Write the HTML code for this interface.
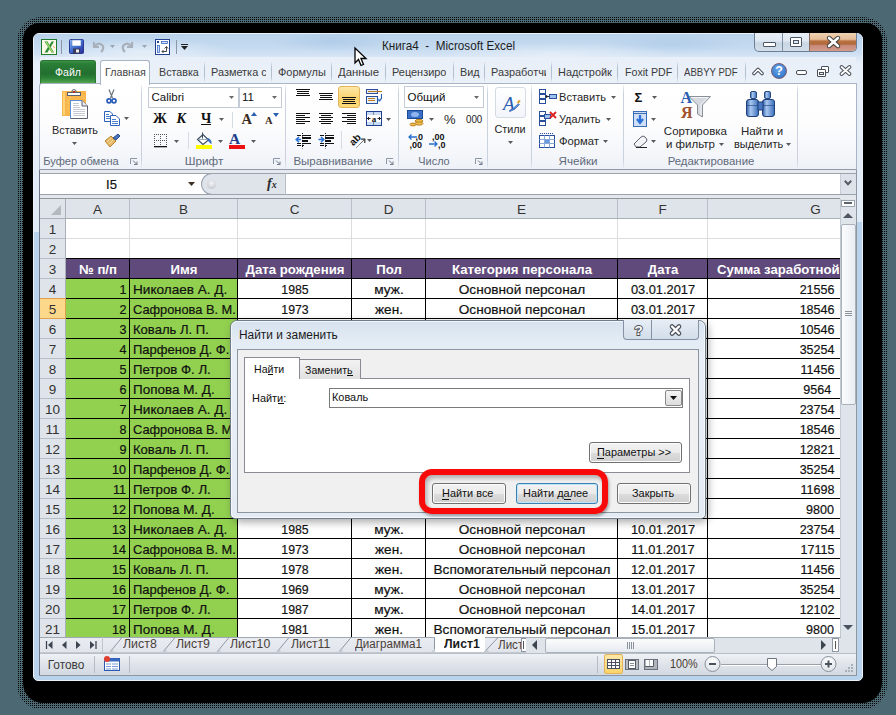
<!DOCTYPE html>
<html><head><meta charset="utf-8"><title>Excel</title>
<style>
html,body{margin:0;padding:0;}
body{width:896px;height:715px;overflow:hidden;position:relative;background:#4c6973;font-family:"Liberation Sans",sans-serif;}
div{position:absolute;box-sizing:border-box;}
.t{white-space:nowrap;}
.g{-webkit-text-stroke:0.2px currentColor;}
svg{position:absolute;overflow:visible;}
</style></head><body>

<div style="left:17px;top:17px;width:870px;height:692px;border-radius:24px;background-image:repeating-conic-gradient(#000 0 25%,transparent 0 100%);background-size:2px 2px;"></div>
<div style="left:23px;top:23px;width:859px;height:680px;background:#000;border-radius:16px 16px 20px 20px;"></div>
<div style="left:33px;top:33px;width:830px;height:648px;background:#b9d3ec;border-radius:6px 6px 5px 5px;border:1px solid #eaf3fb;"></div>
<div style="left:34px;top:34px;width:828px;height:188px;border-radius:5px 5px 0 0;background:linear-gradient(#b9d2eb 0px,#bfd6ed 6px,#c6dbf0 14px,#d0e1f3 20px,#dfe9f6 25px,#e8eff8 30px,#e8eff8 60px,#e1ebf6 188px);"></div>
<div style="left:34px;top:222px;width:6px;height:10px;background:#e1ebf6;"></div>
<div style="left:34px;top:34px;width:828px;height:26px;background:radial-gradient(ellipse 90px 14px at 110px 18px,rgba(255,255,255,0.45),rgba(255,255,255,0)),radial-gradient(ellipse 120px 12px at 520px 20px,rgba(255,255,255,0.4),rgba(255,255,255,0)),radial-gradient(ellipse 60px 10px at 300px 8px,rgba(150,185,225,0.35),rgba(150,185,225,0)),radial-gradient(ellipse 70px 10px at 640px 10px,rgba(150,185,225,0.3),rgba(150,185,225,0));"></div>
<div style="left:40px;top:57px;width:816px;height:27px;background:linear-gradient(#e8eff8,#ebf1f9);"></div>
<div class="t" style="left:381.5px;top:39.30px;font-size:13px;line-height:13px;color:#1e1e1e;font-weight:normal;transform:scaleX(0.9);transform-origin:0 0;">Книга4&nbsp; -&nbsp; Microsoft Excel</div>
<div style="left:754px;top:33px;width:103px;height:19px;border:1px solid #6e7f95;border-top:none;border-radius:0 0 5px 5px;background:linear-gradient(#e9eff6 0%,#dfe8f2 45%,#c9d6e4 55%,#d3dee9 100%);overflow:hidden;"><div style="left:27px;top:0;width:1px;height:18px;background:#7d8ea3;"></div><div style="left:54px;top:0;width:1px;height:18px;background:#8a6a5a;"></div><div style="left:55px;top:0;width:47px;height:18px;background:linear-gradient(#f0d2b2 0%,#e5bd98 35%,#b8703e 45%,#b06a3a 62%,#c98a7a 70%,#d39c8c 100%);"></div></div>
<div style="left:763px;top:42px;width:13px;height:5px;background:#fff;border:1px solid #4a5666;border-radius:1px;"></div>
<div style="left:790px;top:37px;width:12px;height:10px;background:#fff;border:1px solid #4a5666;border-radius:1px;"></div>
<div style="left:793px;top:40px;width:6px;height:4px;border:1px solid #4a5666;background:#dfe6ee;"></div>
<svg style="left:826px;top:36px" width="15" height="12" viewBox="0 0 15 12"><path d="M3 2 L12 10 M12 2 L3 10" stroke="#3a3a3a" stroke-width="4.4" stroke-linecap="round"/><path d="M3 2 L12 10 M12 2 L3 10" stroke="#fff" stroke-width="2.6" stroke-linecap="round"/></svg>
<div style="left:40px;top:60px;width:56px;height:24px;background:linear-gradient(#3a9444 0,#2a7e36 12%,#236f30 55%,#2c8338 75%,#5eae52 100%);border:1px solid #2a7434;border-bottom:none;border-radius:3px 3px 0 0;"></div>
<div class="t" style="left:55px;top:67.27px;font-size:11.5px;line-height:11.5px;color:#fff;font-weight:normal;transform:scaleX(0.92);transform-origin:0 0;">Файл</div>
<div style="left:39px;top:83px;width:818px;height:87px;background:linear-gradient(#ffffff 0px,#fdfdfe 40px,#f4f6fa 70px,#edf1f7 86px);border:1px solid #a9b5c4;border-bottom-color:#8e9aa8;border-radius:3px 0 0 0;"></div>
<div style="left:100px;top:60px;width:50px;height:25px;background:linear-gradient(#fdfeff,#ffffff);border:1px solid #a9b5c4;border-bottom:none;border-radius:3px 3px 0 0;"></div>
<div class="t" style="left:104.5px;top:67.27px;font-size:11.5px;line-height:11.5px;color:#444;font-weight:normal;transform:scaleX(0.93);transform-origin:0 0;">Главная</div>
<div class="t" style="left:158.5px;top:67.27px;font-size:11.5px;line-height:11.5px;color:#3b3b3b;font-weight:normal;transform:scaleX(0.931);transform-origin:0 0;">Вставка</div>
<div style="left:204px;top:61px;width:1px;height:22px;background:linear-gradient(rgba(170,185,205,0),#b3c0d0 30%,#b3c0d0 70%,rgba(170,185,205,0));"></div>
<div style="left:211.3px;top:62px;width:54.3px;height:18px;overflow:hidden;"><div class="t" style="left:0;top:5.27px;font-size:11.5px;line-height:11.5px;color:#3b3b3b;transform:scaleX(0.95);transform-origin:0 0;">Разметка страницы</div></div>
<div style="left:271px;top:61px;width:1px;height:22px;background:linear-gradient(rgba(170,185,205,0),#b3c0d0 30%,#b3c0d0 70%,rgba(170,185,205,0));"></div>
<div class="t" style="left:277.6px;top:67.27px;font-size:11.5px;line-height:11.5px;color:#3b3b3b;font-weight:normal;transform:scaleX(0.955);transform-origin:0 0;">Формулы</div>
<div style="left:331px;top:61px;width:1px;height:22px;background:linear-gradient(rgba(170,185,205,0),#b3c0d0 30%,#b3c0d0 70%,rgba(170,185,205,0));"></div>
<div class="t" style="left:338px;top:67.27px;font-size:11.5px;line-height:11.5px;color:#3b3b3b;font-weight:normal;transform:scaleX(0.99);transform-origin:0 0;">Данные</div>
<div style="left:385px;top:61px;width:1px;height:22px;background:linear-gradient(rgba(170,185,205,0),#b3c0d0 30%,#b3c0d0 70%,rgba(170,185,205,0));"></div>
<div style="left:392.3px;top:62px;width:54px;height:18px;overflow:hidden;"><div class="t" style="left:0;top:5.27px;font-size:11.5px;line-height:11.5px;color:#3b3b3b;transform:scaleX(0.95);transform-origin:0 0;">Рецензирование</div></div>
<div style="left:453px;top:61px;width:1px;height:22px;background:linear-gradient(rgba(170,185,205,0),#b3c0d0 30%,#b3c0d0 70%,rgba(170,185,205,0));"></div>
<div class="t" style="left:459.8px;top:67.27px;font-size:11.5px;line-height:11.5px;color:#3b3b3b;font-weight:normal;transform:scaleX(0.938);transform-origin:0 0;">Вид</div>
<div style="left:484px;top:61px;width:1px;height:22px;background:linear-gradient(rgba(170,185,205,0),#b3c0d0 30%,#b3c0d0 70%,rgba(170,185,205,0));"></div>
<div style="left:491px;top:62px;width:55px;height:18px;overflow:hidden;"><div class="t" style="left:0;top:5.27px;font-size:11.5px;line-height:11.5px;color:#3b3b3b;transform:scaleX(0.95);transform-origin:0 0;">Разработчик</div></div>
<div style="left:551px;top:61px;width:1px;height:22px;background:linear-gradient(rgba(170,185,205,0),#b3c0d0 30%,#b3c0d0 70%,rgba(170,185,205,0));"></div>
<div style="left:558.3px;top:62px;width:53.4px;height:18px;overflow:hidden;"><div class="t" style="left:0;top:5.27px;font-size:11.5px;line-height:11.5px;color:#3b3b3b;transform:scaleX(0.95);transform-origin:0 0;">Надстройки</div></div>
<div style="left:617px;top:61px;width:1px;height:22px;background:linear-gradient(rgba(170,185,205,0),#b3c0d0 30%,#b3c0d0 70%,rgba(170,185,205,0));"></div>
<div class="t" style="left:624.5px;top:67.27px;font-size:11.5px;line-height:11.5px;color:#3b3b3b;font-weight:normal;transform:scaleX(0.925);transform-origin:0 0;">Foxit PDF</div>
<div style="left:677px;top:61px;width:1px;height:22px;background:linear-gradient(rgba(170,185,205,0),#b3c0d0 30%,#b3c0d0 70%,rgba(170,185,205,0));"></div>
<div class="t" style="left:684px;top:67.27px;font-size:11.5px;line-height:11.5px;color:#3b3b3b;font-weight:normal;transform:scaleX(0.834);transform-origin:0 0;">ABBYY PDF</div>
<div style="left:745px;top:61px;width:1px;height:22px;background:linear-gradient(rgba(170,185,205,0),#b3c0d0 30%,#b3c0d0 70%,rgba(170,185,205,0));"></div>
<svg style="left:752px;top:67px" width="12" height="9" viewBox="0 0 12 9"><path d="M2 6.5 L6 2.5 L10 6.5" stroke="#4a4f58" stroke-width="3.6" fill="none" stroke-linecap="round" stroke-linejoin="round"/><path d="M2 6.5 L6 2.5 L10 6.5" stroke="#fff" stroke-width="1.6" fill="none" stroke-linecap="round" stroke-linejoin="round"/></svg>
<div style="left:771px;top:63px;width:16px;height:16px;border-radius:50%;background:radial-gradient(circle at 45% 35%,#6aa6ea,#3a7fd0 65%,#2a66b8);border:1px solid #7a5a6a;"></div>
<div class="t" style="left:479.20000000000005px;width:600px;text-align:center;top:64.92px;font-size:12.5px;line-height:12.5px;color:#fff;font-weight:bold;transform-origin:50% 0;">?</div>
<div style="left:796px;top:70px;width:11px;height:5px;background:#fff;border:1px solid #4a4f58;border-radius:2px;"></div>
<div style="left:821px;top:66px;width:8px;height:7px;border:1px solid #4a4f58;background:#fff;border-radius:1px;box-shadow:inset 0 0 0 1px #fff;"></div>
<div style="left:817px;top:69px;width:9px;height:8px;border:1px solid #4a4f58;background:#fff;border-radius:1px;"></div>
<div style="left:819px;top:72px;width:5px;height:3px;border:1px solid #4a4f58;background:#e8ecf2;"></div>
<svg style="left:839px;top:65px" width="13" height="11" viewBox="0 0 13 11"><path d="M2.5 2 L10.5 9 M10.5 2 L2.5 9" stroke="#4a4f58" stroke-width="3.8" stroke-linecap="round"/><path d="M2.5 2 L10.5 9 M10.5 2 L2.5 9" stroke="#fff" stroke-width="1.8" stroke-linecap="round"/></svg>
<div style="left:141px;top:85px;width:1px;height:83px;background:linear-gradient(rgba(200,210,225,0.3),#c9d2de 10%,#c9d2de 90%,rgba(200,210,225,0.3));"></div>
<div style="left:285px;top:85px;width:1px;height:83px;background:linear-gradient(rgba(200,210,225,0.3),#c9d2de 10%,#c9d2de 90%,rgba(200,210,225,0.3));"></div>
<div style="left:398px;top:85px;width:1px;height:83px;background:linear-gradient(rgba(200,210,225,0.3),#c9d2de 10%,#c9d2de 90%,rgba(200,210,225,0.3));"></div>
<div style="left:487px;top:85px;width:1px;height:83px;background:linear-gradient(rgba(200,210,225,0.3),#c9d2de 10%,#c9d2de 90%,rgba(200,210,225,0.3));"></div>
<div style="left:531px;top:85px;width:1px;height:83px;background:linear-gradient(rgba(200,210,225,0.3),#c9d2de 10%,#c9d2de 90%,rgba(200,210,225,0.3));"></div>
<div style="left:623px;top:85px;width:1px;height:83px;background:linear-gradient(rgba(200,210,225,0.3),#c9d2de 10%,#c9d2de 90%,rgba(200,210,225,0.3));"></div>
<div style="left:797px;top:85px;width:1px;height:83px;background:linear-gradient(rgba(200,210,225,0.3),#c9d2de 10%,#c9d2de 90%,rgba(200,210,225,0.3));"></div>
<div class="t" style="left:-218.8px;width:600px;text-align:center;top:156.27px;font-size:11.5px;line-height:11.5px;color:#5f6a7a;font-weight:normal;transform:scaleX(0.966);transform-origin:50% 0;">Буфер обмена</div>
<div class="t" style="left:-95.69999999999999px;width:600px;text-align:center;top:156.27px;font-size:11.5px;line-height:11.5px;color:#5f6a7a;font-weight:normal;transform:scaleX(1.02);transform-origin:50% 0;">Шрифт</div>
<div class="t" style="left:33px;width:600px;text-align:center;top:156.27px;font-size:11.5px;line-height:11.5px;color:#5f6a7a;font-weight:normal;transform-origin:50% 0;">Выравнивание</div>
<div class="t" style="left:133.7px;width:600px;text-align:center;top:156.27px;font-size:11.5px;line-height:11.5px;color:#5f6a7a;font-weight:normal;transform:scaleX(0.95);transform-origin:50% 0;">Число</div>
<div class="t" style="left:277.79999999999995px;width:600px;text-align:center;top:156.27px;font-size:11.5px;line-height:11.5px;color:#5f6a7a;font-weight:normal;transform:scaleX(1.01);transform-origin:50% 0;">Ячейки</div>
<div class="t" style="left:411px;width:600px;text-align:center;top:156.27px;font-size:11.5px;line-height:11.5px;color:#5f6a7a;font-weight:normal;transform:scaleX(0.99);transform-origin:50% 0;">Редактирование</div>
<svg style="left:130px;top:158px" width="8" height="7" viewBox="0 0 8 7"><path d="M0.5 6 V0.5 H7" stroke="#8a96a6" fill="none"/><path d="M3 2.5 L7 6.5 M7 3.5 V6.5 H4" stroke="#6f7b8a" fill="none"/></svg>
<svg style="left:273px;top:158px" width="8" height="7" viewBox="0 0 8 7"><path d="M0.5 6 V0.5 H7" stroke="#8a96a6" fill="none"/><path d="M3 2.5 L7 6.5 M7 3.5 V6.5 H4" stroke="#6f7b8a" fill="none"/></svg>
<svg style="left:386px;top:158px" width="8" height="7" viewBox="0 0 8 7"><path d="M0.5 6 V0.5 H7" stroke="#8a96a6" fill="none"/><path d="M3 2.5 L7 6.5 M7 3.5 V6.5 H4" stroke="#6f7b8a" fill="none"/></svg>
<svg style="left:475px;top:158px" width="8" height="7" viewBox="0 0 8 7"><path d="M0.5 6 V0.5 H7" stroke="#8a96a6" fill="none"/><path d="M3 2.5 L7 6.5 M7 3.5 V6.5 H4" stroke="#6f7b8a" fill="none"/></svg>
<svg style="left:58px;top:87px" width="32" height="32" viewBox="0 0 32 32">
<rect x="4" y="4" width="24" height="25" fill="#f7b54a"/>
<rect x="5" y="5" width="2" height="23" fill="#fcd27a"/>
<path d="M9.5 9h1 M11.5 11h1 M9.5 13h1 M9.5 16h1 M9.5 19h1 M9.5 22h1 M11.5 25h1 M23.5 9h1 M25.5 11h1" stroke="#fde29a"/>
<rect x="9.5" y="5.5" width="13" height="3" fill="#fff" stroke="#5a6070"/>
<path d="M14 5.5 V3.5 Q16 1.5 18 3.5 V5.5" fill="none" stroke="#5a6070"/>
<rect x="15" y="4" width="2" height="2" fill="#c03020"/>
<path d="M12.5 13.5 H24 L29.5 19 V31.5 H12.5 Z" fill="#fff" stroke="#5a6070"/>
<path d="M12.5 31.5 V13.5 H24" stroke="#5a90d8" fill="none"/>
<path d="M24 13.5 V19 H29.5" fill="#e8ecf2" stroke="#5a6070"/>
<path d="M15 16.5h6 M15 18.5h6 M15 20.5h7 M15 22.5h12 M15 24.5h12 M15 26.5h12 M15 28.5h12" stroke="#aab4c2" stroke-width="0.7"/>
</svg>
<div class="t" style="left:51.7px;top:124.87px;font-size:11.5px;line-height:11.5px;color:#262626;font-weight:normal;transform:scaleX(0.944);transform-origin:0 0;">Вставить</div>
<svg style="left:72px;top:142px" width="5" height="3" viewBox="0 0 5 3"><path d="M0 0 H5 L2.5 3 Z" fill="#5a5a5a"/></svg>
<svg style="left:105px;top:89px" width="13" height="15" viewBox="0 0 13 15">
<path d="M4 0.5 L7.5 9 M9 0.5 L5.5 9" stroke="#6d737c" stroke-width="1.2"/>
<circle cx="4" cy="11.8" r="2" fill="none" stroke="#2a5cb8" stroke-width="1.7"/>
<circle cx="9" cy="11.8" r="2" fill="none" stroke="#2a5cb8" stroke-width="1.7"/>
</svg>
<svg style="left:104px;top:111px" width="16" height="15" viewBox="0 0 16 15">
<path d="M0.5 0.5 H6 L8.5 3 V10.5 H0.5 Z" fill="#fff" stroke="#2f62b8"/>
<path d="M2 3.5h3 M2 5.5h5 M2 7.5h5" stroke="#4a7fd0"/>
<path d="M6.5 4.5 H12 L15.5 8 V14.5 H6.5 Z" fill="#fff" stroke="#2f62b8"/>
<path d="M8 8.5h4 M8 10.5h6 M8 12.5h6" stroke="#4a7fd0"/>
</svg>
<svg style="left:124px;top:117px" width="5" height="3" viewBox="0 0 5 3"><path d="M0 0 H5 L2.5 3 Z" fill="#5a5a5a"/></svg>
<svg style="left:104px;top:133px" width="17" height="15" viewBox="0 0 17 15">
<path d="M1 8 L7 3 L12 8 L6 14 Z" fill="#e7b868" stroke="#b98530"/>
<path d="M3 9 L7 5 M5 11 L9 7" stroke="#f6dca0"/>
<path d="M9 5 L14 1 L16 3 L12 7 Z" fill="#4a74b8" stroke="#2d4f8a"/>
</svg>
<div style="left:148px;top:87px;width:91px;height:21px;background:#fff;border:1px solid #c3cbd6;"></div>
<div style="left:239px;top:87px;width:43px;height:21px;background:#fff;border:1px solid #c3cbd6;"></div>
<div class="t" style="left:151.5px;top:92.27px;font-size:11.5px;line-height:11.5px;color:#111;font-weight:normal;transform-origin:0 0;">Calibri</div>
<div class="t" style="left:242px;top:92.27px;font-size:11.5px;line-height:11.5px;color:#111;font-weight:normal;transform-origin:0 0;">11</div>
<svg style="left:229px;top:96px" width="5" height="3" viewBox="0 0 5 3"><path d="M0 0 H5 L2.5 3 Z" fill="#6a6a6a"/></svg>
<svg style="left:272px;top:96px" width="5" height="3" viewBox="0 0 5 3"><path d="M0 0 H5 L2.5 3 Z" fill="#6a6a6a"/></svg>
<div class="t" style="left:153px;top:112.15px;font-size:14px;line-height:14px;color:#111;font-weight:bold;font-family:'Liberation Serif',serif;transform-origin:0 0;">Ж</div>
<div class="t" style="left:176.5px;top:112.15px;font-size:14px;line-height:14px;color:#111;font-weight:bold;font-family:'Liberation Serif',serif;transform-origin:0 0;font-style:italic;">К</div>
<div class="t" style="left:201px;top:112.15px;font-size:14px;line-height:14px;color:#111;font-weight:bold;font-family:'Liberation Serif',serif;transform-origin:0 0;">Ч</div>
<div style="left:201px;top:124px;width:10px;height:1px;background:#111;"></div>
<svg style="left:219px;top:118px" width="5" height="3" viewBox="0 0 5 3"><path d="M0 0 H5 L2.5 3 Z" fill="#5a5a5a"/></svg>
<div style="left:232px;top:112px;width:1px;height:16px;background:#d4dbe5;"></div>
<div class="t" style="left:241.5px;top:112.23px;font-size:14.5px;line-height:14.5px;color:#3a2c20;font-weight:bold;font-family:'Liberation Serif',serif;transform-origin:0 0;">A</div>
<svg style="left:251px;top:112px" width="6" height="4" viewBox="0 0 6 4"><path d="M0 4 L3 0 L6 4Z" fill="#2a5fb0"/></svg>
<div class="t" style="left:265px;top:115.61px;font-size:10.5px;line-height:10.5px;color:#3a2c20;font-weight:bold;font-family:'Liberation Serif',serif;transform-origin:0 0;">A</div>
<svg style="left:273px;top:113px" width="6" height="4" viewBox="0 0 6 4"><path d="M0 0 L3 4 L6 0Z" fill="#2a5fb0"/></svg>
<svg style="left:154px;top:134px" width="14" height="14" viewBox="0 0 14 14"><rect x="0" y="0" width="1" height="1" fill="#555"/><rect x="6" y="0" width="1" height="1" fill="#555"/><rect x="12" y="0" width="1" height="1" fill="#555"/><rect x="0" y="2" width="1" height="1" fill="#555"/><rect x="6" y="2" width="1" height="1" fill="#555"/><rect x="12" y="2" width="1" height="1" fill="#555"/><rect x="0" y="4" width="1" height="1" fill="#555"/><rect x="6" y="4" width="1" height="1" fill="#555"/><rect x="12" y="4" width="1" height="1" fill="#555"/><rect x="0" y="6" width="1" height="1" fill="#555"/><rect x="6" y="6" width="1" height="1" fill="#555"/><rect x="12" y="6" width="1" height="1" fill="#555"/><rect x="0" y="8" width="1" height="1" fill="#555"/><rect x="6" y="8" width="1" height="1" fill="#555"/><rect x="12" y="8" width="1" height="1" fill="#555"/><rect x="0" y="10" width="1" height="1" fill="#555"/><rect x="6" y="10" width="1" height="1" fill="#555"/><rect x="12" y="10" width="1" height="1" fill="#555"/><rect x="0" y="12" width="1" height="1" fill="#555"/><rect x="6" y="12" width="1" height="1" fill="#555"/><rect x="12" y="12" width="1" height="1" fill="#555"/><rect x="2" y="0" width="1" height="1" fill="#555"/><rect x="4" y="0" width="1" height="1" fill="#555"/><rect x="8" y="0" width="1" height="1" fill="#555"/><rect x="10" y="0" width="1" height="1" fill="#555"/><rect x="2" y="6" width="1" height="1" fill="#555"/><rect x="4" y="6" width="1" height="1" fill="#555"/><rect x="8" y="6" width="1" height="1" fill="#555"/><rect x="10" y="6" width="1" height="1" fill="#555"/><rect x="0" y="12" width="13" height="1.3" fill="#111"/></svg>
<svg style="left:174px;top:140px" width="5" height="3" viewBox="0 0 5 3"><path d="M0 0 H5 L2.5 3 Z" fill="#5a5a5a"/></svg>
<div style="left:188px;top:132px;width:1px;height:17px;background:#d4dbe5;"></div>
<svg style="left:195px;top:132px" width="18" height="17" viewBox="0 0 18 17">
<path d="M2.5 7.5 L8 2.5 L13.5 8 L8 12.5 Z" fill="#fff" stroke="#3a4a60" stroke-width="1.1"/>
<path d="M3 7.5 H13" stroke="#9ab" />
<path d="M7.5 0.5 V6.5" stroke="#3a4a60"/>
<path d="M12.5 6.5 Q16.5 7 16 11.5 L14 9.5 Z" fill="#3a78d0" stroke="#2a5aa8" stroke-width="0.8"/>
<rect x="1" y="13" width="16" height="4" fill="#ffff00"/>
</svg>
<svg style="left:218px;top:140px" width="5" height="3" viewBox="0 0 5 3"><path d="M0 0 H5 L2.5 3 Z" fill="#5a5a5a"/></svg>
<div class="t" style="left:229px;top:130.88px;font-size:15.5px;line-height:15.5px;color:#1f3f8a;font-weight:bold;font-family:'Liberation Serif',serif;transform-origin:0 0;">A</div>
<div style="left:228.5px;top:145px;width:16px;height:4px;background:#ee1111;"></div>
<svg style="left:251px;top:140px" width="5" height="3" viewBox="0 0 5 3"><path d="M0 0 H5 L2.5 3 Z" fill="#5a5a5a"/></svg>
<svg style="left:296px;top:89px" width="20" height="20" viewBox="0 0 20 20"><path d="M0 0.5 h14 M1 2.5 h12 M1 4.5 h12 M0 6.5 h14 " stroke="#111" stroke-width="1"/></svg>
<svg style="left:319px;top:93px" width="20" height="20" viewBox="0 0 20 20"><path d="M0 0.5 h14 M1 2.5 h12 M1 4.5 h12 M0 6.5 h14 " stroke="#111" stroke-width="1"/></svg>
<div style="left:338px;top:86px;width:22px;height:22px;background:linear-gradient(#fde8a8,#fbd36a 60%,#fcdc7a);border:1px solid #e3b35a;border-radius:3px;"></div>
<svg style="left:342px;top:97px" width="20" height="20" viewBox="0 0 20 20"><path d="M0 0.5 h14 M1 2.5 h12 M1 4.5 h12 M0 6.5 h14 " stroke="#111" stroke-width="1"/></svg>
<svg style="left:365px;top:88px" width="18" height="17" viewBox="0 0 18 17">
<rect x="1.5" y="1.5" width="11" height="4" fill="#e8f1fc" stroke="#2a4f9a"/>
<rect x="1.5" y="8.5" width="11" height="7" fill="#e8f1fc" stroke="#2a4f9a"/>
<path d="M3 3.5 H17" stroke="#c07a20" stroke-width="1.1"/>
<path d="M3 10.5 H10 M3 12.5 H10" stroke="#c07a20" stroke-width="1.1"/>
<path d="M16.5 6 V10.5 L14 13" stroke="#2a5fb0" fill="none" stroke-width="1.1"/>
<path d="M13 10.5 L13.5 13.5 L16 13Z" fill="#2a70d0"/>
</svg>
<svg style="left:296px;top:113px" width="20" height="20" viewBox="0 0 20 20"><path d="M0 0.5 h14 M0 2.5 h9 M0 4.5 h14 M0 6.5 h9 M0 8.5 h14 M0 10.5 h9 " stroke="#111" stroke-width="1"/></svg>
<svg style="left:319px;top:113px" width="20" height="20" viewBox="0 0 20 20"><path d="M0 0.5 h14 M2 2.5 h10 M0 4.5 h14 M2 6.5 h10 M0 8.5 h14 M2 10.5 h10 " stroke="#111" stroke-width="1"/></svg>
<svg style="left:342px;top:113px" width="20" height="20" viewBox="0 0 20 20"><path d="M0 0.5 h14 M5 2.5 h9 M0 4.5 h14 M5 6.5 h9 M0 8.5 h14 M5 10.5 h9 " stroke="#111" stroke-width="1"/></svg>
<svg style="left:366px;top:111px" width="16" height="15" viewBox="0 0 16 15">
<rect x="0.5" y="0.5" width="15" height="14" fill="#fff" stroke="#1f3f8f"/>
<rect x="1" y="1" width="14" height="3" fill="#c9dcf5"/>
<rect x="1" y="11" width="14" height="3" fill="#c9dcf5"/>
<path d="M7.5 1 V4 M7.5 11 V14" stroke="#7a8aa0"/>
<path d="M1 7.5 H4.5 M11.5 7.5 H15" stroke="#222"/>
<path d="M3 6 L1.5 7.5 L3 9 M13 6 L14.5 7.5 L13 9" stroke="#222" fill="none"/>
<text x="8" y="10.5" font-family="Liberation Serif" font-size="9" font-weight="bold" text-anchor="middle" fill="#111">a</text>
</svg>
<svg style="left:386px;top:118px" width="5" height="3" viewBox="0 0 5 3"><path d="M0 0 H5 L2.5 3 Z" fill="#5a5a5a"/></svg>
<svg style="left:295px;top:133px" width="18" height="16" viewBox="0 0 18 16">
<path d="M2 2.5h4 M2 10.5h4 M2 12.5h4" stroke="#111"/>
<path d="M7.5 0 V16" stroke="#111" stroke-dasharray="1 1.6"/>
<path d="M7 2.5h9 M7 10.5h9 M7 12.5h2" stroke="#111"/>
<rect x="7" y="4" width="9" height="2" fill="#111"/>
<rect x="7" y="7" width="6" height="2" fill="#111"/>
<path d="M6 6.6 H2 M4 4 L1.2 6.6 L4 9.2" stroke="#2a6fd6" fill="none" stroke-width="1.5"/>
</svg>
<svg style="left:318px;top:133px" width="18" height="16" viewBox="0 0 18 16">
<path d="M2 2.5h4 M2 10.5h4 M2 12.5h4" stroke="#111"/>
<path d="M7.5 0 V16" stroke="#111" stroke-dasharray="1 1.6"/>
<path d="M7 2.5h9 M7 10.5h9 M7 12.5h2" stroke="#111"/>
<rect x="7" y="4" width="9" height="2" fill="#111"/>
<rect x="7" y="7" width="6" height="2" fill="#111"/>
<path d="M0.5 6.6 H5 M3 4 L5.8 6.6 L3 9.2" stroke="#2a6fd6" fill="none" stroke-width="1.5"/>
</svg>
<div style="left:341px;top:131px;width:1px;height:18px;background:#d4dbe5;"></div>
<svg style="left:348px;top:132px" width="18" height="17" viewBox="0 0 18 17">
<text x="0" y="0" transform="translate(5.2,14.2) rotate(-45)" font-family="Liberation Sans" font-size="10" font-weight="bold" fill="#111">ab</text>
<path d="M8.5 15.5 L16 8" stroke="#333" stroke-dasharray="1 0.6"/>
<path d="M13 7.2 H16.8 V11" stroke="#333" fill="none" stroke-width="1.2"/>
</svg>
<svg style="left:367px;top:139px" width="5" height="3" viewBox="0 0 5 3"><path d="M0 0 H5 L2.5 3 Z" fill="#5a5a5a"/></svg>
<div style="left:404px;top:86px;width:80px;height:22px;background:#fff;border:1px solid #c3cbd6;"></div>
<div class="t" style="left:407.5px;top:92.27px;font-size:11.5px;line-height:11.5px;color:#111;font-weight:normal;transform-origin:0 0;">Общий</div>
<svg style="left:474px;top:96px" width="5" height="3" viewBox="0 0 5 3"><path d="M0 0 H5 L2.5 3 Z" fill="#6a6a6a"/></svg>
<svg style="left:407px;top:110px" width="18" height="18" viewBox="0 0 18 18">
<rect x="0.5" y="0.5" width="15" height="8" fill="#3a6fc8" stroke="#1d4a95"/>
<ellipse cx="8" cy="4.5" rx="4" ry="2.5" fill="#8fb5ee"/>
<ellipse cx="12" cy="11" rx="4" ry="1.6" fill="#f2c050" stroke="#b98020"/>
<ellipse cx="12" cy="13.5" rx="4" ry="1.6" fill="#f2c050" stroke="#b98020"/>
<ellipse cx="6" cy="14.5" rx="3" ry="1.4" fill="#f2c050" stroke="#b98020"/>
</svg>
<svg style="left:429px;top:118px" width="5" height="3" viewBox="0 0 5 3"><path d="M0 0 H5 L2.5 3 Z" fill="#5a5a5a"/></svg>
<div class="t" style="left:444px;top:113.00px;font-size:13px;line-height:13px;color:#222;font-weight:normal;transform-origin:0 0;">%</div>
<div class="t" style="left:466px;top:114.27px;font-size:11.5px;line-height:11.5px;color:#222;font-weight:normal;transform:scaleX(0.85);transform-origin:0 0;">000</div>
<div class="t" style="left:415.5px;top:133.38px;font-size:9px;line-height:9px;color:#111;font-weight:bold;transform-origin:0 0;">,0</div>
<div class="t" style="left:409.5px;top:140.88px;font-size:9px;line-height:9px;color:#111;font-weight:bold;transform-origin:0 0;">,00</div>
<svg style="left:408px;top:134px" width="9" height="6" viewBox="0 0 9 6"><path d="M9 3 H1 M3.5 0.5 L1 3 L3.5 5.5" stroke="#2a70d0" stroke-width="1.3" fill="none"/></svg>
<div class="t" style="left:432px;top:133.38px;font-size:9px;line-height:9px;color:#111;font-weight:bold;transform-origin:0 0;">,00</div>
<div class="t" style="left:438px;top:140.88px;font-size:9px;line-height:9px;color:#111;font-weight:bold;transform-origin:0 0;">,0</div>
<svg style="left:429px;top:141px" width="9" height="6" viewBox="0 0 9 6"><path d="M0 3 H8 M5.5 0.5 L8 3 L5.5 5.5" stroke="#2a70d0" stroke-width="1.3" fill="none"/></svg>
<div style="left:495px;top:87px;width:31px;height:31px;background:linear-gradient(#ffffff,#f2f5fa);border:1px solid #d5dbe4;border-radius:3px;"></div>
<svg style="left:500px;top:92px" width="22" height="22" viewBox="0 0 22 22">
<text x="3" y="18" font-family="Liberation Serif" font-style="italic" font-size="19" fill="#2a5cb0">A</text>
<path d="M9 19 Q13 17 18.5 11.5 L19.5 12.5 Q15 18 10 19.5 Z" fill="#5a8fd8" stroke="#2a5cb0" stroke-width="0.6"/>
<path d="M17.5 11 L20 8.5" stroke="#e0a030" stroke-width="2"/>
</svg>
<div class="t" style="left:210.3px;width:600px;text-align:center;top:123.77px;font-size:11.5px;line-height:11.5px;color:#262626;font-weight:normal;transform:scaleX(0.942);transform-origin:50% 0;">Стили</div>
<svg style="left:508px;top:141px" width="5" height="3" viewBox="0 0 5 3"><path d="M0 0 H5 L2.5 3 Z" fill="#5a5a5a"/></svg>
<svg style="left:539px;top:89px" width="18" height="15" viewBox="0 0 18 15">
<rect x="0.5" y="0.5" width="6" height="4" fill="#fff" stroke="#2a4f9a"/>
<rect x="0.5" y="5.5" width="6" height="4" fill="#fff" stroke="#2a4f9a"/>
<rect x="0.5" y="10.5" width="6" height="4" fill="#fff" stroke="#2a4f9a"/>
<rect x="10.5" y="5.5" width="7" height="4" fill="#9ec0ee" stroke="#2a4f9a"/>
<path d="M7 7.5 H10 M8 6 L7 7.5 L8 9" stroke="#222" fill="none"/>
</svg>
<div class="t" style="left:559px;top:92.27px;font-size:11.5px;line-height:11.5px;color:#262626;font-weight:normal;transform:scaleX(0.964);transform-origin:0 0;">Вставить</div>
<svg style="left:611px;top:96px" width="5" height="3" viewBox="0 0 5 3"><path d="M0 0 H5 L2.5 3 Z" fill="#5a5a5a"/></svg>
<svg style="left:539px;top:111px" width="18" height="15" viewBox="0 0 18 15">
<rect x="0.5" y="0.5" width="6" height="4" fill="#fff" stroke="#2a4f9a"/>
<rect x="0.5" y="5.5" width="6" height="4" fill="#fff" stroke="#2a4f9a"/>
<rect x="0.5" y="10.5" width="6" height="4" fill="#fff" stroke="#2a4f9a"/>
<rect x="5.5" y="3.5" width="6" height="4" fill="#9ec0ee" stroke="#2a4f9a"/>
<path d="M11 1 L17 7 M17 1 L11 7" stroke="#e02020" stroke-width="1.8"/>
</svg>
<div class="t" style="left:559px;top:114.27px;font-size:11.5px;line-height:11.5px;color:#262626;font-weight:normal;transform:scaleX(0.946);transform-origin:0 0;">Удалить</div>
<svg style="left:606px;top:118px" width="5" height="3" viewBox="0 0 5 3"><path d="M0 0 H5 L2.5 3 Z" fill="#5a5a5a"/></svg>
<svg style="left:539px;top:133px" width="17" height="16" viewBox="0 0 17 16">
<rect x="0.5" y="2.5" width="15" height="12" fill="#fff" stroke="#2a4f9a"/>
<path d="M0.5 6.5 H15.5 M0.5 10.5 H15.5 M5.5 2.5 V14.5 M10.5 2.5 V14.5" stroke="#8aa8d8"/>
<rect x="6" y="7" width="4" height="3" fill="#6a9ae0"/>
<path d="M1 0.5 H15" stroke="#2a4f9a" stroke-dasharray="1 1"/>
</svg>
<div class="t" style="left:559px;top:136.07px;font-size:11.5px;line-height:11.5px;color:#262626;font-weight:normal;transform:scaleX(0.979);transform-origin:0 0;">Формат</div>
<svg style="left:603px;top:140px" width="5" height="3" viewBox="0 0 5 3"><path d="M0 0 H5 L2.5 3 Z" fill="#5a5a5a"/></svg>
<div class="t" style="left:634.5px;top:91.00px;font-size:13px;line-height:13px;color:#111;font-weight:bold;transform-origin:0 0;">Σ</div>
<svg style="left:652px;top:96px" width="5" height="3" viewBox="0 0 5 3"><path d="M0 0 H5 L2.5 3 Z" fill="#5a5a5a"/></svg>
<svg style="left:633px;top:111px" width="14" height="16" viewBox="0 0 14 16">
<rect x="0.5" y="0.5" width="13" height="15" fill="#cfe0f6" stroke="#3a6ab8"/>
<path d="M1 2.5 H13" stroke="#3a6ab8"/>
<path d="M7 4 V11 M4 8 L7 12 L10 8" stroke="#2a70d8" stroke-width="2.2" fill="none"/>
</svg>
<svg style="left:651px;top:118px" width="5" height="3" viewBox="0 0 5 3"><path d="M0 0 H5 L2.5 3 Z" fill="#5a5a5a"/></svg>
<svg style="left:633px;top:135px" width="15" height="13" viewBox="0 0 15 13">
<path d="M1 9 L8 2 Q10 0 12 2 L13 3 Q15 5 13 7 L7 12 H3 Z" fill="#f2f4f8" stroke="#5a6070"/>
<path d="M3 12.5 H14" stroke="#222"/>
</svg>
<svg style="left:651px;top:140px" width="5" height="3" viewBox="0 0 5 3"><path d="M0 0 H5 L2.5 3 Z" fill="#5a5a5a"/></svg>
<svg style="left:680px;top:89px" width="32" height="30" viewBox="0 0 32 30">
<path d="M9 7.5 H30.5 L22.5 16 V28 L17.5 25 V16 Z" fill="#d5d9df" stroke="#8a9098"/>
<path d="M11.5 8.5 H28 L21 15.5 V26" stroke="#f4f5f7" fill="none"/>
<text x="0.5" y="14" font-family="Liberation Serif" font-size="16" fill="#2a5cb0" font-weight="bold">A</text>
<text x="1" y="29" font-family="Liberation Serif" font-size="16" fill="#a0522d" font-weight="bold">Я</text>
</svg>
<div class="t" style="left:395.4px;width:600px;text-align:center;top:125.87px;font-size:11.5px;line-height:11.5px;color:#262626;font-weight:normal;transform-origin:50% 0;">Сортировка</div>
<div class="t" style="left:666px;top:138.57px;font-size:11.5px;line-height:11.5px;color:#262626;font-weight:normal;transform-origin:0 0;">и фильтр</div>
<svg style="left:719px;top:143px" width="5" height="3" viewBox="0 0 5 3"><path d="M0 0 H5 L2.5 3 Z" fill="#5a5a5a"/></svg>
<svg style="left:746px;top:91px" width="29" height="26" viewBox="0 0 29 26">
<defs><linearGradient id="bn" x1="0" x2="1"><stop offset="0" stop-color="#2f5ea8"/><stop offset="0.35" stop-color="#a9c8f0"/><stop offset="1" stop-color="#3a6cb8"/></linearGradient></defs>
<rect x="4.5" y="0.5" width="6" height="7" rx="1.5" fill="url(#bn)" stroke="#2a4a80"/>
<rect x="18.5" y="0.5" width="6" height="7" rx="1.5" fill="url(#bn)" stroke="#2a4a80"/>
<rect x="0.5" y="8.5" width="12" height="17" rx="2.5" fill="url(#bn)" stroke="#1d3f7a"/>
<rect x="16.5" y="8.5" width="12" height="17" rx="2.5" fill="url(#bn)" stroke="#1d3f7a"/>
<rect x="12" y="11" width="5" height="8" fill="#4a78c0" stroke="#1d3f7a"/>
<path d="M1 14.5 H12 M17 14.5 H28" stroke="#1d3f7a" stroke-opacity="0.6"/>
</svg>
<div class="t" style="left:461.5px;width:600px;text-align:center;top:125.87px;font-size:11.5px;line-height:11.5px;color:#262626;font-weight:normal;transform:scaleX(0.995);transform-origin:50% 0;">Найти и</div>
<div class="t" style="left:733.5px;top:138.57px;font-size:11.5px;line-height:11.5px;color:#262626;font-weight:normal;transform:scaleX(0.954);transform-origin:0 0;">выделить</div>
<svg style="left:786px;top:143px" width="5" height="3" viewBox="0 0 5 3"><path d="M0 0 H5 L2.5 3 Z" fill="#5a5a5a"/></svg>
<div style="left:39px;top:170px;width:818px;height:29px;background:#e6e9ee;"></div>
<div style="left:40px;top:173px;width:816px;height:1px;background:#9aa3ae;"></div>
<div style="left:40px;top:174px;width:801px;height:20px;background:#fff;"></div>
<div style="left:40px;top:194px;width:816px;height:1px;background:#9aa3ae;"></div>
<div style="left:40px;top:195px;width:816px;height:3px;background:#e4e7ec;"></div>
<div style="left:40px;top:198px;width:800px;height:1px;background:#9098a2;"></div>
<div style="left:39px;top:170px;width:1px;height:506px;background:#6f7888;"></div>
<div class="t" style="left:-188.5px;width:600px;text-align:center;top:177.50px;font-size:13px;line-height:13px;color:#111;font-weight:normal;transform-origin:50% 0;-webkit-text-stroke:0.2px currentColor;">I5</div>
<svg style="left:188px;top:182px" width="7" height="4" viewBox="0 0 7 4"><path d="M0 0 H7 L3.5 4Z" fill="#3c3024"/></svg>
<div style="left:201px;top:173px;width:85px;height:22px;background:#dfe3ea;border-radius:11px 0 0 11px;border:1px solid #9aa3ae;border-right:1px solid #b9bfc8;"></div>
<div style="left:206.5px;top:179.5px;width:9px;height:9px;border-radius:50%;background:radial-gradient(circle at 50% 35%,#f4f5f7,#b9bec6);"></div>
<div class="t" style="left:267px;top:177.15px;font-size:14px;line-height:14px;color:#2b2b2b;font-weight:bold;font-family:'Liberation Serif',serif;transform-origin:0 0;"><i>f</i><span style="font-size:10px;font-style:italic">x</span></div>
<div style="left:840px;top:174px;width:16px;height:20px;background:#dee3ea;border-left:1px solid #c9ced6;"></div>
<svg style="left:844px;top:180px" width="8" height="6" viewBox="0 0 8 6"><path d="M0.8 0.8 L4 4.2 L7.2 0.8" stroke="#555c66" stroke-width="2" fill="none"/></svg>
<div style="left:40px;top:199px;width:800px;height:19px;background:#dfe3ea;"></div>
<div style="left:40px;top:218px;width:800px;height:1px;background:#a9b0b8;"></div>
<div style="left:66px;top:219px;width:774px;height:418px;background:#fff;"></div>
<div style="left:40px;top:219px;width:25px;height:418px;background:#dfe3ea;"></div>
<div style="left:65px;top:199px;width:1px;height:438px;background:#a9b0b8;"></div>
<div style="left:129px;top:199px;width:1px;height:19px;background:#b7bec6;"></div>
<div style="left:237px;top:199px;width:1px;height:19px;background:#b7bec6;"></div>
<div style="left:351px;top:199px;width:1px;height:19px;background:#b7bec6;"></div>
<div style="left:425px;top:199px;width:1px;height:19px;background:#b7bec6;"></div>
<div style="left:617px;top:199px;width:1px;height:19px;background:#b7bec6;"></div>
<div style="left:707px;top:199px;width:1px;height:19px;background:#b7bec6;"></div>
<svg style="left:50px;top:204px" width="12" height="12" viewBox="0 0 12 12"><path d="M11 1 V11 H1 Z" fill="#b4b9c0"/></svg>
<div class="t" style="left:-202.5px;width:600px;text-align:center;top:202.57px;font-size:13.5px;line-height:13.5px;color:#333;font-weight:normal;transform-origin:50% 0;">A</div>
<div class="t" style="left:-116.5px;width:600px;text-align:center;top:202.57px;font-size:13.5px;line-height:13.5px;color:#333;font-weight:normal;transform-origin:50% 0;">B</div>
<div class="t" style="left:-5.5px;width:600px;text-align:center;top:202.57px;font-size:13.5px;line-height:13.5px;color:#333;font-weight:normal;transform-origin:50% 0;">C</div>
<div class="t" style="left:88.5px;width:600px;text-align:center;top:202.57px;font-size:13.5px;line-height:13.5px;color:#333;font-weight:normal;transform-origin:50% 0;">D</div>
<div class="t" style="left:221.5px;width:600px;text-align:center;top:202.57px;font-size:13.5px;line-height:13.5px;color:#333;font-weight:normal;transform-origin:50% 0;">E</div>
<div class="t" style="left:362.5px;width:600px;text-align:center;top:202.57px;font-size:13.5px;line-height:13.5px;color:#333;font-weight:normal;transform-origin:50% 0;">F</div>
<div class="t" style="left:515.5px;width:600px;text-align:center;top:202.57px;font-size:13.5px;line-height:13.5px;color:#333;font-weight:normal;transform-origin:50% 0;">G</div>
<div style="left:40px;top:238px;width:25px;height:1px;background:#b7bec6;"></div>
<div style="left:66px;top:238px;width:774px;height:1px;background:#dadcdd;"></div>
<div style="left:40px;top:258px;width:25px;height:1px;background:#b7bec6;"></div>
<div style="left:66px;top:258px;width:774px;height:1px;background:#dadcdd;"></div>
<div style="left:40px;top:278px;width:25px;height:1px;background:#b7bec6;"></div>
<div style="left:40px;top:298px;width:25px;height:1px;background:#b7bec6;"></div>
<div style="left:40px;top:318px;width:25px;height:1px;background:#b7bec6;"></div>
<div style="left:40px;top:338px;width:25px;height:1px;background:#b7bec6;"></div>
<div style="left:40px;top:358px;width:25px;height:1px;background:#b7bec6;"></div>
<div style="left:40px;top:378px;width:25px;height:1px;background:#b7bec6;"></div>
<div style="left:40px;top:398px;width:25px;height:1px;background:#b7bec6;"></div>
<div style="left:40px;top:418px;width:25px;height:1px;background:#b7bec6;"></div>
<div style="left:40px;top:438px;width:25px;height:1px;background:#b7bec6;"></div>
<div style="left:40px;top:458px;width:25px;height:1px;background:#b7bec6;"></div>
<div style="left:40px;top:478px;width:25px;height:1px;background:#b7bec6;"></div>
<div style="left:40px;top:498px;width:25px;height:1px;background:#b7bec6;"></div>
<div style="left:40px;top:518px;width:25px;height:1px;background:#b7bec6;"></div>
<div style="left:40px;top:538px;width:25px;height:1px;background:#b7bec6;"></div>
<div style="left:40px;top:558px;width:25px;height:1px;background:#b7bec6;"></div>
<div style="left:40px;top:578px;width:25px;height:1px;background:#b7bec6;"></div>
<div style="left:40px;top:598px;width:25px;height:1px;background:#b7bec6;"></div>
<div style="left:40px;top:618px;width:25px;height:1px;background:#b7bec6;"></div>
<div style="left:40px;top:638px;width:25px;height:1px;background:#b7bec6;"></div>
<div style="left:129px;top:219px;width:1px;height:40px;background:#dadcdd;"></div>
<div style="left:237px;top:219px;width:1px;height:40px;background:#dadcdd;"></div>
<div style="left:351px;top:219px;width:1px;height:40px;background:#dadcdd;"></div>
<div style="left:425px;top:219px;width:1px;height:40px;background:#dadcdd;"></div>
<div style="left:617px;top:219px;width:1px;height:40px;background:#dadcdd;"></div>
<div style="left:707px;top:219px;width:1px;height:40px;background:#dadcdd;"></div>
<div class="t" style="left:-247.5px;width:600px;text-align:center;top:222.57px;font-size:13.5px;line-height:13.5px;color:#333;font-weight:normal;transform-origin:50% 0;">1</div>
<div class="t" style="left:-247.5px;width:600px;text-align:center;top:242.57px;font-size:13.5px;line-height:13.5px;color:#333;font-weight:normal;transform-origin:50% 0;">2</div>
<div class="t" style="left:-247.5px;width:600px;text-align:center;top:262.57px;font-size:13.5px;line-height:13.5px;color:#333;font-weight:normal;transform-origin:50% 0;">3</div>
<div class="t" style="left:-247.5px;width:600px;text-align:center;top:282.57px;font-size:13.5px;line-height:13.5px;color:#333;font-weight:normal;transform-origin:50% 0;">4</div>
<div class="t" style="left:-247.5px;width:600px;text-align:center;top:302.57px;font-size:13.5px;line-height:13.5px;color:#333;font-weight:normal;transform-origin:50% 0;">5</div>
<div class="t" style="left:-247.5px;width:600px;text-align:center;top:322.57px;font-size:13.5px;line-height:13.5px;color:#333;font-weight:normal;transform-origin:50% 0;">6</div>
<div class="t" style="left:-247.5px;width:600px;text-align:center;top:342.57px;font-size:13.5px;line-height:13.5px;color:#333;font-weight:normal;transform-origin:50% 0;">7</div>
<div class="t" style="left:-247.5px;width:600px;text-align:center;top:362.57px;font-size:13.5px;line-height:13.5px;color:#333;font-weight:normal;transform-origin:50% 0;">8</div>
<div class="t" style="left:-247.5px;width:600px;text-align:center;top:382.57px;font-size:13.5px;line-height:13.5px;color:#333;font-weight:normal;transform-origin:50% 0;">9</div>
<div class="t" style="left:-247.5px;width:600px;text-align:center;top:402.57px;font-size:13.5px;line-height:13.5px;color:#333;font-weight:normal;transform-origin:50% 0;">10</div>
<div class="t" style="left:-247.5px;width:600px;text-align:center;top:422.57px;font-size:13.5px;line-height:13.5px;color:#333;font-weight:normal;transform-origin:50% 0;">11</div>
<div class="t" style="left:-247.5px;width:600px;text-align:center;top:442.57px;font-size:13.5px;line-height:13.5px;color:#333;font-weight:normal;transform-origin:50% 0;">12</div>
<div class="t" style="left:-247.5px;width:600px;text-align:center;top:462.57px;font-size:13.5px;line-height:13.5px;color:#333;font-weight:normal;transform-origin:50% 0;">13</div>
<div class="t" style="left:-247.5px;width:600px;text-align:center;top:482.57px;font-size:13.5px;line-height:13.5px;color:#333;font-weight:normal;transform-origin:50% 0;">14</div>
<div class="t" style="left:-247.5px;width:600px;text-align:center;top:502.57px;font-size:13.5px;line-height:13.5px;color:#333;font-weight:normal;transform-origin:50% 0;">15</div>
<div class="t" style="left:-247.5px;width:600px;text-align:center;top:522.57px;font-size:13.5px;line-height:13.5px;color:#333;font-weight:normal;transform-origin:50% 0;">16</div>
<div class="t" style="left:-247.5px;width:600px;text-align:center;top:542.57px;font-size:13.5px;line-height:13.5px;color:#333;font-weight:normal;transform-origin:50% 0;">17</div>
<div class="t" style="left:-247.5px;width:600px;text-align:center;top:562.57px;font-size:13.5px;line-height:13.5px;color:#333;font-weight:normal;transform-origin:50% 0;">18</div>
<div class="t" style="left:-247.5px;width:600px;text-align:center;top:582.57px;font-size:13.5px;line-height:13.5px;color:#333;font-weight:normal;transform-origin:50% 0;">19</div>
<div class="t" style="left:-247.5px;width:600px;text-align:center;top:602.57px;font-size:13.5px;line-height:13.5px;color:#333;font-weight:normal;transform-origin:50% 0;">20</div>
<div class="t" style="left:-247.5px;width:600px;text-align:center;top:622.57px;font-size:13.5px;line-height:13.5px;color:#333;font-weight:normal;transform-origin:50% 0;">21</div>
<div style="left:40px;top:298px;width:26px;height:21px;background:#fcd88b;border:1px solid #e3a04a;border-left:none;"></div>
<div class="t" style="left:-247.5px;width:600px;text-align:center;top:302.57px;font-size:13.5px;line-height:13.5px;color:#333;font-weight:normal;transform-origin:50% 0;">5</div>
<div style="left:66px;top:259px;width:774px;height:20px;background:#604a7b;"></div>
<div style="left:66px;top:279px;width:172px;height:358px;background:#92d050;"></div>
<div style="left:66px;top:258px;width:774px;height:1px;background:#000;"></div>
<div style="left:66px;top:278px;width:774px;height:1px;background:#000;"></div>
<div style="left:66px;top:298px;width:774px;height:1px;background:#000;"></div>
<div style="left:66px;top:318px;width:774px;height:1px;background:#000;"></div>
<div style="left:66px;top:338px;width:774px;height:1px;background:#000;"></div>
<div style="left:66px;top:358px;width:774px;height:1px;background:#000;"></div>
<div style="left:66px;top:378px;width:774px;height:1px;background:#000;"></div>
<div style="left:66px;top:398px;width:774px;height:1px;background:#000;"></div>
<div style="left:66px;top:418px;width:774px;height:1px;background:#000;"></div>
<div style="left:66px;top:438px;width:774px;height:1px;background:#000;"></div>
<div style="left:66px;top:458px;width:774px;height:1px;background:#000;"></div>
<div style="left:66px;top:478px;width:774px;height:1px;background:#000;"></div>
<div style="left:66px;top:498px;width:774px;height:1px;background:#000;"></div>
<div style="left:66px;top:518px;width:774px;height:1px;background:#000;"></div>
<div style="left:66px;top:538px;width:774px;height:1px;background:#000;"></div>
<div style="left:66px;top:558px;width:774px;height:1px;background:#000;"></div>
<div style="left:66px;top:578px;width:774px;height:1px;background:#000;"></div>
<div style="left:66px;top:598px;width:774px;height:1px;background:#000;"></div>
<div style="left:66px;top:618px;width:774px;height:1px;background:#000;"></div>
<div style="left:66px;top:638px;width:774px;height:1px;background:#000;"></div>
<div style="left:129px;top:258px;width:1px;height:379px;background:#000;"></div>
<div style="left:237px;top:258px;width:1px;height:379px;background:#000;"></div>
<div style="left:351px;top:258px;width:1px;height:379px;background:#000;"></div>
<div style="left:425px;top:258px;width:1px;height:379px;background:#000;"></div>
<div style="left:617px;top:258px;width:1px;height:379px;background:#000;"></div>
<div style="left:707px;top:258px;width:1px;height:379px;background:#000;"></div>
<div class="t" style="left:-202.5px;width:600px;text-align:center;top:262.57px;font-size:13.5px;line-height:13.5px;color:#fff;font-weight:bold;transform:scaleX(0.977);transform-origin:50% 0;">№ п/п</div>
<div class="t" style="left:-116px;width:600px;text-align:center;top:262.57px;font-size:13.5px;line-height:13.5px;color:#fff;font-weight:bold;transform:scaleX(0.977);transform-origin:50% 0;">Имя</div>
<div class="t" style="left:-5.5px;width:600px;text-align:center;top:262.57px;font-size:13.5px;line-height:13.5px;color:#fff;font-weight:bold;transform:scaleX(0.977);transform-origin:50% 0;">Дата рождения</div>
<div class="t" style="left:88.5px;width:600px;text-align:center;top:262.57px;font-size:13.5px;line-height:13.5px;color:#fff;font-weight:bold;transform:scaleX(0.977);transform-origin:50% 0;">Пол</div>
<div class="t" style="left:221.5px;width:600px;text-align:center;top:262.57px;font-size:13.5px;line-height:13.5px;color:#fff;font-weight:bold;transform:scaleX(0.977);transform-origin:50% 0;">Категория персонала</div>
<div class="t" style="left:362.5px;width:600px;text-align:center;top:262.57px;font-size:13.5px;line-height:13.5px;color:#fff;font-weight:bold;transform:scaleX(0.977);transform-origin:50% 0;">Дата</div>
<div style="left:708px;top:259px;width:132px;height:19px;overflow:hidden;"><div class="t" style="left:8.6px;top:3.57px;font-size:13.5px;line-height:13.5px;color:#fff;font-weight:bold;transform:scaleX(0.977);transform-origin:0 0;">Сумма заработной платы, руб.</div></div>
<div class="t" style="right:769.5px;top:282.77px;font-size:13.5px;line-height:13.5px;color:#111;font-weight:normal;transform:scaleX(0.93);transform-origin:100% 0;-webkit-text-stroke:0.2px currentColor;">1</div>
<div class="t" style="left:132.5px;top:282.77px;font-size:13.5px;line-height:13.5px;color:#111;font-weight:normal;transform:scaleX(1.005);transform-origin:0 0;-webkit-text-stroke:0.2px currentColor;">Николаев А. Д.</div>
<div class="t" style="left:-5.5px;width:600px;text-align:center;top:282.77px;font-size:13.5px;line-height:13.5px;color:#111;font-weight:normal;transform:scaleX(0.91);transform-origin:50% 0;-webkit-text-stroke:0.2px currentColor;">1985</div>
<div class="t" style="left:88.5px;width:600px;text-align:center;top:282.77px;font-size:13.5px;line-height:13.5px;color:#111;font-weight:normal;transform:scaleX(1.01);transform-origin:50% 0;-webkit-text-stroke:0.2px currentColor;">муж.</div>
<div class="t" style="left:221.5px;width:600px;text-align:center;top:282.77px;font-size:13.5px;line-height:13.5px;color:#111;font-weight:normal;transform:scaleX(1.01);transform-origin:50% 0;-webkit-text-stroke:0.2px currentColor;">Основной персонал</div>
<div class="t" style="left:362.5px;width:600px;text-align:center;top:282.77px;font-size:13.5px;line-height:13.5px;color:#111;font-weight:normal;transform:scaleX(0.95);transform-origin:50% 0;-webkit-text-stroke:0.2px currentColor;">03.01.2017</div>
<div class="t" style="right:61.700000000000045px;top:282.77px;font-size:13.5px;line-height:13.5px;color:#111;font-weight:normal;transform:scaleX(0.93);transform-origin:100% 0;-webkit-text-stroke:0.2px currentColor;">21556</div>
<div class="t" style="right:769.5px;top:302.77px;font-size:13.5px;line-height:13.5px;color:#111;font-weight:normal;transform:scaleX(0.93);transform-origin:100% 0;-webkit-text-stroke:0.2px currentColor;">2</div>
<div class="t" style="left:132.5px;top:302.77px;font-size:13.5px;line-height:13.5px;color:#111;font-weight:normal;transform:scaleX(0.95);transform-origin:0 0;-webkit-text-stroke:0.2px currentColor;">Сафронова В. М.</div>
<div class="t" style="left:-5.5px;width:600px;text-align:center;top:302.77px;font-size:13.5px;line-height:13.5px;color:#111;font-weight:normal;transform:scaleX(0.91);transform-origin:50% 0;-webkit-text-stroke:0.2px currentColor;">1973</div>
<div class="t" style="left:88.5px;width:600px;text-align:center;top:302.77px;font-size:13.5px;line-height:13.5px;color:#111;font-weight:normal;transform:scaleX(1.01);transform-origin:50% 0;-webkit-text-stroke:0.2px currentColor;">жен.</div>
<div class="t" style="left:221.5px;width:600px;text-align:center;top:302.77px;font-size:13.5px;line-height:13.5px;color:#111;font-weight:normal;transform:scaleX(1.01);transform-origin:50% 0;-webkit-text-stroke:0.2px currentColor;">Основной персонал</div>
<div class="t" style="left:362.5px;width:600px;text-align:center;top:302.77px;font-size:13.5px;line-height:13.5px;color:#111;font-weight:normal;transform:scaleX(0.95);transform-origin:50% 0;-webkit-text-stroke:0.2px currentColor;">03.01.2017</div>
<div class="t" style="right:61.700000000000045px;top:302.77px;font-size:13.5px;line-height:13.5px;color:#111;font-weight:normal;transform:scaleX(0.93);transform-origin:100% 0;-webkit-text-stroke:0.2px currentColor;">18546</div>
<div class="t" style="right:769.5px;top:322.77px;font-size:13.5px;line-height:13.5px;color:#111;font-weight:normal;transform:scaleX(0.93);transform-origin:100% 0;-webkit-text-stroke:0.2px currentColor;">3</div>
<div class="t" style="left:132.5px;top:322.77px;font-size:13.5px;line-height:13.5px;color:#111;font-weight:normal;transform:scaleX(0.967);transform-origin:0 0;-webkit-text-stroke:0.2px currentColor;">Коваль Л. П.</div>
<div class="t" style="left:-5.5px;width:600px;text-align:center;top:322.77px;font-size:13.5px;line-height:13.5px;color:#111;font-weight:normal;transform:scaleX(0.91);transform-origin:50% 0;-webkit-text-stroke:0.2px currentColor;">1978</div>
<div class="t" style="left:88.5px;width:600px;text-align:center;top:322.77px;font-size:13.5px;line-height:13.5px;color:#111;font-weight:normal;transform:scaleX(1.01);transform-origin:50% 0;-webkit-text-stroke:0.2px currentColor;">жен.</div>
<div class="t" style="left:221.5px;width:600px;text-align:center;top:322.77px;font-size:13.5px;line-height:13.5px;color:#111;font-weight:normal;transform:scaleX(1.01);transform-origin:50% 0;-webkit-text-stroke:0.2px currentColor;">Вспомогательный персонал</div>
<div class="t" style="left:362.5px;width:600px;text-align:center;top:322.77px;font-size:13.5px;line-height:13.5px;color:#111;font-weight:normal;transform:scaleX(0.95);transform-origin:50% 0;-webkit-text-stroke:0.2px currentColor;">04.01.2017</div>
<div class="t" style="right:61.700000000000045px;top:322.77px;font-size:13.5px;line-height:13.5px;color:#111;font-weight:normal;transform:scaleX(0.93);transform-origin:100% 0;-webkit-text-stroke:0.2px currentColor;">10546</div>
<div class="t" style="right:769.5px;top:342.77px;font-size:13.5px;line-height:13.5px;color:#111;font-weight:normal;transform:scaleX(0.93);transform-origin:100% 0;-webkit-text-stroke:0.2px currentColor;">4</div>
<div class="t" style="left:132.5px;top:342.77px;font-size:13.5px;line-height:13.5px;color:#111;font-weight:normal;transform:scaleX(0.965);transform-origin:0 0;-webkit-text-stroke:0.2px currentColor;">Парфенов Д. Ф.</div>
<div class="t" style="left:-5.5px;width:600px;text-align:center;top:342.77px;font-size:13.5px;line-height:13.5px;color:#111;font-weight:normal;transform:scaleX(0.91);transform-origin:50% 0;-webkit-text-stroke:0.2px currentColor;">1969</div>
<div class="t" style="left:88.5px;width:600px;text-align:center;top:342.77px;font-size:13.5px;line-height:13.5px;color:#111;font-weight:normal;transform:scaleX(1.01);transform-origin:50% 0;-webkit-text-stroke:0.2px currentColor;">муж.</div>
<div class="t" style="left:221.5px;width:600px;text-align:center;top:342.77px;font-size:13.5px;line-height:13.5px;color:#111;font-weight:normal;transform:scaleX(1.01);transform-origin:50% 0;-webkit-text-stroke:0.2px currentColor;">Основной персонал</div>
<div class="t" style="left:362.5px;width:600px;text-align:center;top:342.77px;font-size:13.5px;line-height:13.5px;color:#111;font-weight:normal;transform:scaleX(0.95);transform-origin:50% 0;-webkit-text-stroke:0.2px currentColor;">05.01.2017</div>
<div class="t" style="right:61.700000000000045px;top:342.77px;font-size:13.5px;line-height:13.5px;color:#111;font-weight:normal;transform:scaleX(0.93);transform-origin:100% 0;-webkit-text-stroke:0.2px currentColor;">35254</div>
<div class="t" style="right:769.5px;top:362.77px;font-size:13.5px;line-height:13.5px;color:#111;font-weight:normal;transform:scaleX(0.93);transform-origin:100% 0;-webkit-text-stroke:0.2px currentColor;">5</div>
<div class="t" style="left:132.5px;top:362.77px;font-size:13.5px;line-height:13.5px;color:#111;font-weight:normal;transform:scaleX(0.981);transform-origin:0 0;-webkit-text-stroke:0.2px currentColor;">Петров Ф. Л.</div>
<div class="t" style="left:-5.5px;width:600px;text-align:center;top:362.77px;font-size:13.5px;line-height:13.5px;color:#111;font-weight:normal;transform:scaleX(0.91);transform-origin:50% 0;-webkit-text-stroke:0.2px currentColor;">1987</div>
<div class="t" style="left:88.5px;width:600px;text-align:center;top:362.77px;font-size:13.5px;line-height:13.5px;color:#111;font-weight:normal;transform:scaleX(1.01);transform-origin:50% 0;-webkit-text-stroke:0.2px currentColor;">муж.</div>
<div class="t" style="left:221.5px;width:600px;text-align:center;top:362.77px;font-size:13.5px;line-height:13.5px;color:#111;font-weight:normal;transform:scaleX(1.01);transform-origin:50% 0;-webkit-text-stroke:0.2px currentColor;">Основной персонал</div>
<div class="t" style="left:362.5px;width:600px;text-align:center;top:362.77px;font-size:13.5px;line-height:13.5px;color:#111;font-weight:normal;transform:scaleX(0.95);transform-origin:50% 0;-webkit-text-stroke:0.2px currentColor;">06.01.2017</div>
<div class="t" style="right:61.700000000000045px;top:362.77px;font-size:13.5px;line-height:13.5px;color:#111;font-weight:normal;transform:scaleX(0.93);transform-origin:100% 0;-webkit-text-stroke:0.2px currentColor;">11456</div>
<div class="t" style="right:769.5px;top:382.77px;font-size:13.5px;line-height:13.5px;color:#111;font-weight:normal;transform:scaleX(0.93);transform-origin:100% 0;-webkit-text-stroke:0.2px currentColor;">6</div>
<div class="t" style="left:132.5px;top:382.77px;font-size:13.5px;line-height:13.5px;color:#111;font-weight:normal;transform:scaleX(0.997);transform-origin:0 0;-webkit-text-stroke:0.2px currentColor;">Попова М. Д.</div>
<div class="t" style="left:-5.5px;width:600px;text-align:center;top:382.77px;font-size:13.5px;line-height:13.5px;color:#111;font-weight:normal;transform:scaleX(0.91);transform-origin:50% 0;-webkit-text-stroke:0.2px currentColor;">1981</div>
<div class="t" style="left:88.5px;width:600px;text-align:center;top:382.77px;font-size:13.5px;line-height:13.5px;color:#111;font-weight:normal;transform:scaleX(1.01);transform-origin:50% 0;-webkit-text-stroke:0.2px currentColor;">жен.</div>
<div class="t" style="left:221.5px;width:600px;text-align:center;top:382.77px;font-size:13.5px;line-height:13.5px;color:#111;font-weight:normal;transform:scaleX(1.01);transform-origin:50% 0;-webkit-text-stroke:0.2px currentColor;">Вспомогательный персонал</div>
<div class="t" style="left:362.5px;width:600px;text-align:center;top:382.77px;font-size:13.5px;line-height:13.5px;color:#111;font-weight:normal;transform:scaleX(0.95);transform-origin:50% 0;-webkit-text-stroke:0.2px currentColor;">07.01.2017</div>
<div class="t" style="right:61.700000000000045px;top:382.77px;font-size:13.5px;line-height:13.5px;color:#111;font-weight:normal;transform:scaleX(0.93);transform-origin:100% 0;-webkit-text-stroke:0.2px currentColor;">9564&nbsp;</div>
<div class="t" style="right:769.5px;top:402.77px;font-size:13.5px;line-height:13.5px;color:#111;font-weight:normal;transform:scaleX(0.93);transform-origin:100% 0;-webkit-text-stroke:0.2px currentColor;">7</div>
<div class="t" style="left:132.5px;top:402.77px;font-size:13.5px;line-height:13.5px;color:#111;font-weight:normal;transform:scaleX(1.005);transform-origin:0 0;-webkit-text-stroke:0.2px currentColor;">Николаев А. Д.</div>
<div class="t" style="left:-5.5px;width:600px;text-align:center;top:402.77px;font-size:13.5px;line-height:13.5px;color:#111;font-weight:normal;transform:scaleX(0.91);transform-origin:50% 0;-webkit-text-stroke:0.2px currentColor;">1985</div>
<div class="t" style="left:88.5px;width:600px;text-align:center;top:402.77px;font-size:13.5px;line-height:13.5px;color:#111;font-weight:normal;transform:scaleX(1.01);transform-origin:50% 0;-webkit-text-stroke:0.2px currentColor;">муж.</div>
<div class="t" style="left:221.5px;width:600px;text-align:center;top:402.77px;font-size:13.5px;line-height:13.5px;color:#111;font-weight:normal;transform:scaleX(1.01);transform-origin:50% 0;-webkit-text-stroke:0.2px currentColor;">Основной персонал</div>
<div class="t" style="left:362.5px;width:600px;text-align:center;top:402.77px;font-size:13.5px;line-height:13.5px;color:#111;font-weight:normal;transform:scaleX(0.95);transform-origin:50% 0;-webkit-text-stroke:0.2px currentColor;">08.01.2017</div>
<div class="t" style="right:61.700000000000045px;top:402.77px;font-size:13.5px;line-height:13.5px;color:#111;font-weight:normal;transform:scaleX(0.93);transform-origin:100% 0;-webkit-text-stroke:0.2px currentColor;">23754</div>
<div class="t" style="right:769.5px;top:422.77px;font-size:13.5px;line-height:13.5px;color:#111;font-weight:normal;transform:scaleX(0.93);transform-origin:100% 0;-webkit-text-stroke:0.2px currentColor;">8</div>
<div class="t" style="left:132.5px;top:422.77px;font-size:13.5px;line-height:13.5px;color:#111;font-weight:normal;transform:scaleX(0.95);transform-origin:0 0;-webkit-text-stroke:0.2px currentColor;">Сафронова В. М.</div>
<div class="t" style="left:-5.5px;width:600px;text-align:center;top:422.77px;font-size:13.5px;line-height:13.5px;color:#111;font-weight:normal;transform:scaleX(0.91);transform-origin:50% 0;-webkit-text-stroke:0.2px currentColor;">1973</div>
<div class="t" style="left:88.5px;width:600px;text-align:center;top:422.77px;font-size:13.5px;line-height:13.5px;color:#111;font-weight:normal;transform:scaleX(1.01);transform-origin:50% 0;-webkit-text-stroke:0.2px currentColor;">жен.</div>
<div class="t" style="left:221.5px;width:600px;text-align:center;top:422.77px;font-size:13.5px;line-height:13.5px;color:#111;font-weight:normal;transform:scaleX(1.01);transform-origin:50% 0;-webkit-text-stroke:0.2px currentColor;">Основной персонал</div>
<div class="t" style="left:362.5px;width:600px;text-align:center;top:422.77px;font-size:13.5px;line-height:13.5px;color:#111;font-weight:normal;transform:scaleX(0.95);transform-origin:50% 0;-webkit-text-stroke:0.2px currentColor;">09.01.2017</div>
<div class="t" style="right:61.700000000000045px;top:422.77px;font-size:13.5px;line-height:13.5px;color:#111;font-weight:normal;transform:scaleX(0.93);transform-origin:100% 0;-webkit-text-stroke:0.2px currentColor;">18546</div>
<div class="t" style="right:769.5px;top:442.77px;font-size:13.5px;line-height:13.5px;color:#111;font-weight:normal;transform:scaleX(0.93);transform-origin:100% 0;-webkit-text-stroke:0.2px currentColor;">9</div>
<div class="t" style="left:132.5px;top:442.77px;font-size:13.5px;line-height:13.5px;color:#111;font-weight:normal;transform:scaleX(0.967);transform-origin:0 0;-webkit-text-stroke:0.2px currentColor;">Коваль Л. П.</div>
<div class="t" style="left:-5.5px;width:600px;text-align:center;top:442.77px;font-size:13.5px;line-height:13.5px;color:#111;font-weight:normal;transform:scaleX(0.91);transform-origin:50% 0;-webkit-text-stroke:0.2px currentColor;">1978</div>
<div class="t" style="left:88.5px;width:600px;text-align:center;top:442.77px;font-size:13.5px;line-height:13.5px;color:#111;font-weight:normal;transform:scaleX(1.01);transform-origin:50% 0;-webkit-text-stroke:0.2px currentColor;">жен.</div>
<div class="t" style="left:221.5px;width:600px;text-align:center;top:442.77px;font-size:13.5px;line-height:13.5px;color:#111;font-weight:normal;transform:scaleX(1.01);transform-origin:50% 0;-webkit-text-stroke:0.2px currentColor;">Вспомогательный персонал</div>
<div class="t" style="left:362.5px;width:600px;text-align:center;top:442.77px;font-size:13.5px;line-height:13.5px;color:#111;font-weight:normal;transform:scaleX(0.95);transform-origin:50% 0;-webkit-text-stroke:0.2px currentColor;">10.01.2017</div>
<div class="t" style="right:61.700000000000045px;top:442.77px;font-size:13.5px;line-height:13.5px;color:#111;font-weight:normal;transform:scaleX(0.93);transform-origin:100% 0;-webkit-text-stroke:0.2px currentColor;">12821</div>
<div class="t" style="right:769.5px;top:462.77px;font-size:13.5px;line-height:13.5px;color:#111;font-weight:normal;transform:scaleX(0.93);transform-origin:100% 0;-webkit-text-stroke:0.2px currentColor;">10</div>
<div class="t" style="left:132.5px;top:462.77px;font-size:13.5px;line-height:13.5px;color:#111;font-weight:normal;transform:scaleX(0.965);transform-origin:0 0;-webkit-text-stroke:0.2px currentColor;">Парфенов Д. Ф.</div>
<div class="t" style="left:-5.5px;width:600px;text-align:center;top:462.77px;font-size:13.5px;line-height:13.5px;color:#111;font-weight:normal;transform:scaleX(0.91);transform-origin:50% 0;-webkit-text-stroke:0.2px currentColor;">1969</div>
<div class="t" style="left:88.5px;width:600px;text-align:center;top:462.77px;font-size:13.5px;line-height:13.5px;color:#111;font-weight:normal;transform:scaleX(1.01);transform-origin:50% 0;-webkit-text-stroke:0.2px currentColor;">муж.</div>
<div class="t" style="left:221.5px;width:600px;text-align:center;top:462.77px;font-size:13.5px;line-height:13.5px;color:#111;font-weight:normal;transform:scaleX(1.01);transform-origin:50% 0;-webkit-text-stroke:0.2px currentColor;">Основной персонал</div>
<div class="t" style="left:362.5px;width:600px;text-align:center;top:462.77px;font-size:13.5px;line-height:13.5px;color:#111;font-weight:normal;transform:scaleX(0.95);transform-origin:50% 0;-webkit-text-stroke:0.2px currentColor;">11.01.2017</div>
<div class="t" style="right:61.700000000000045px;top:462.77px;font-size:13.5px;line-height:13.5px;color:#111;font-weight:normal;transform:scaleX(0.93);transform-origin:100% 0;-webkit-text-stroke:0.2px currentColor;">35254</div>
<div class="t" style="right:769.5px;top:482.77px;font-size:13.5px;line-height:13.5px;color:#111;font-weight:normal;transform:scaleX(0.93);transform-origin:100% 0;-webkit-text-stroke:0.2px currentColor;">11</div>
<div class="t" style="left:132.5px;top:482.77px;font-size:13.5px;line-height:13.5px;color:#111;font-weight:normal;transform:scaleX(0.981);transform-origin:0 0;-webkit-text-stroke:0.2px currentColor;">Петров Ф. Л.</div>
<div class="t" style="left:-5.5px;width:600px;text-align:center;top:482.77px;font-size:13.5px;line-height:13.5px;color:#111;font-weight:normal;transform:scaleX(0.91);transform-origin:50% 0;-webkit-text-stroke:0.2px currentColor;">1987</div>
<div class="t" style="left:88.5px;width:600px;text-align:center;top:482.77px;font-size:13.5px;line-height:13.5px;color:#111;font-weight:normal;transform:scaleX(1.01);transform-origin:50% 0;-webkit-text-stroke:0.2px currentColor;">муж.</div>
<div class="t" style="left:221.5px;width:600px;text-align:center;top:482.77px;font-size:13.5px;line-height:13.5px;color:#111;font-weight:normal;transform:scaleX(1.01);transform-origin:50% 0;-webkit-text-stroke:0.2px currentColor;">Основной персонал</div>
<div class="t" style="left:362.5px;width:600px;text-align:center;top:482.77px;font-size:13.5px;line-height:13.5px;color:#111;font-weight:normal;transform:scaleX(0.95);transform-origin:50% 0;-webkit-text-stroke:0.2px currentColor;">12.01.2017</div>
<div class="t" style="right:61.700000000000045px;top:482.77px;font-size:13.5px;line-height:13.5px;color:#111;font-weight:normal;transform:scaleX(0.93);transform-origin:100% 0;-webkit-text-stroke:0.2px currentColor;">11698</div>
<div class="t" style="right:769.5px;top:502.77px;font-size:13.5px;line-height:13.5px;color:#111;font-weight:normal;transform:scaleX(0.93);transform-origin:100% 0;-webkit-text-stroke:0.2px currentColor;">12</div>
<div class="t" style="left:132.5px;top:502.77px;font-size:13.5px;line-height:13.5px;color:#111;font-weight:normal;transform:scaleX(0.997);transform-origin:0 0;-webkit-text-stroke:0.2px currentColor;">Попова М. Д.</div>
<div class="t" style="left:-5.5px;width:600px;text-align:center;top:502.77px;font-size:13.5px;line-height:13.5px;color:#111;font-weight:normal;transform:scaleX(0.91);transform-origin:50% 0;-webkit-text-stroke:0.2px currentColor;">1981</div>
<div class="t" style="left:88.5px;width:600px;text-align:center;top:502.77px;font-size:13.5px;line-height:13.5px;color:#111;font-weight:normal;transform:scaleX(1.01);transform-origin:50% 0;-webkit-text-stroke:0.2px currentColor;">жен.</div>
<div class="t" style="left:221.5px;width:600px;text-align:center;top:502.77px;font-size:13.5px;line-height:13.5px;color:#111;font-weight:normal;transform:scaleX(1.01);transform-origin:50% 0;-webkit-text-stroke:0.2px currentColor;">Вспомогательный персонал</div>
<div class="t" style="left:362.5px;width:600px;text-align:center;top:502.77px;font-size:13.5px;line-height:13.5px;color:#111;font-weight:normal;transform:scaleX(0.95);transform-origin:50% 0;-webkit-text-stroke:0.2px currentColor;">13.01.2017</div>
<div class="t" style="right:61.700000000000045px;top:502.77px;font-size:13.5px;line-height:13.5px;color:#111;font-weight:normal;transform:scaleX(0.93);transform-origin:100% 0;-webkit-text-stroke:0.2px currentColor;">9800</div>
<div class="t" style="right:769.5px;top:522.77px;font-size:13.5px;line-height:13.5px;color:#111;font-weight:normal;transform:scaleX(0.93);transform-origin:100% 0;-webkit-text-stroke:0.2px currentColor;">13</div>
<div class="t" style="left:132.5px;top:522.77px;font-size:13.5px;line-height:13.5px;color:#111;font-weight:normal;transform:scaleX(1.005);transform-origin:0 0;-webkit-text-stroke:0.2px currentColor;">Николаев А. Д.</div>
<div class="t" style="left:-5.5px;width:600px;text-align:center;top:522.77px;font-size:13.5px;line-height:13.5px;color:#111;font-weight:normal;transform:scaleX(0.91);transform-origin:50% 0;-webkit-text-stroke:0.2px currentColor;">1985</div>
<div class="t" style="left:88.5px;width:600px;text-align:center;top:522.77px;font-size:13.5px;line-height:13.5px;color:#111;font-weight:normal;transform:scaleX(1.01);transform-origin:50% 0;-webkit-text-stroke:0.2px currentColor;">муж.</div>
<div class="t" style="left:221.5px;width:600px;text-align:center;top:522.77px;font-size:13.5px;line-height:13.5px;color:#111;font-weight:normal;transform:scaleX(1.01);transform-origin:50% 0;-webkit-text-stroke:0.2px currentColor;">Основной персонал</div>
<div class="t" style="left:362.5px;width:600px;text-align:center;top:522.77px;font-size:13.5px;line-height:13.5px;color:#111;font-weight:normal;transform:scaleX(0.95);transform-origin:50% 0;-webkit-text-stroke:0.2px currentColor;">10.01.2017</div>
<div class="t" style="right:61.700000000000045px;top:522.77px;font-size:13.5px;line-height:13.5px;color:#111;font-weight:normal;transform:scaleX(0.93);transform-origin:100% 0;-webkit-text-stroke:0.2px currentColor;">23754</div>
<div class="t" style="right:769.5px;top:542.77px;font-size:13.5px;line-height:13.5px;color:#111;font-weight:normal;transform:scaleX(0.93);transform-origin:100% 0;-webkit-text-stroke:0.2px currentColor;">14</div>
<div class="t" style="left:132.5px;top:542.77px;font-size:13.5px;line-height:13.5px;color:#111;font-weight:normal;transform:scaleX(0.95);transform-origin:0 0;-webkit-text-stroke:0.2px currentColor;">Сафронова В. М.</div>
<div class="t" style="left:-5.5px;width:600px;text-align:center;top:542.77px;font-size:13.5px;line-height:13.5px;color:#111;font-weight:normal;transform:scaleX(0.91);transform-origin:50% 0;-webkit-text-stroke:0.2px currentColor;">1973</div>
<div class="t" style="left:88.5px;width:600px;text-align:center;top:542.77px;font-size:13.5px;line-height:13.5px;color:#111;font-weight:normal;transform:scaleX(1.01);transform-origin:50% 0;-webkit-text-stroke:0.2px currentColor;">жен.</div>
<div class="t" style="left:221.5px;width:600px;text-align:center;top:542.77px;font-size:13.5px;line-height:13.5px;color:#111;font-weight:normal;transform:scaleX(1.01);transform-origin:50% 0;-webkit-text-stroke:0.2px currentColor;">Основной персонал</div>
<div class="t" style="left:362.5px;width:600px;text-align:center;top:542.77px;font-size:13.5px;line-height:13.5px;color:#111;font-weight:normal;transform:scaleX(0.95);transform-origin:50% 0;-webkit-text-stroke:0.2px currentColor;">11.01.2017</div>
<div class="t" style="right:61.700000000000045px;top:542.77px;font-size:13.5px;line-height:13.5px;color:#111;font-weight:normal;transform:scaleX(0.93);transform-origin:100% 0;-webkit-text-stroke:0.2px currentColor;">17115</div>
<div class="t" style="right:769.5px;top:562.77px;font-size:13.5px;line-height:13.5px;color:#111;font-weight:normal;transform:scaleX(0.93);transform-origin:100% 0;-webkit-text-stroke:0.2px currentColor;">15</div>
<div class="t" style="left:132.5px;top:562.77px;font-size:13.5px;line-height:13.5px;color:#111;font-weight:normal;transform:scaleX(0.967);transform-origin:0 0;-webkit-text-stroke:0.2px currentColor;">Коваль Л. П.</div>
<div class="t" style="left:-5.5px;width:600px;text-align:center;top:562.77px;font-size:13.5px;line-height:13.5px;color:#111;font-weight:normal;transform:scaleX(0.91);transform-origin:50% 0;-webkit-text-stroke:0.2px currentColor;">1978</div>
<div class="t" style="left:88.5px;width:600px;text-align:center;top:562.77px;font-size:13.5px;line-height:13.5px;color:#111;font-weight:normal;transform:scaleX(1.01);transform-origin:50% 0;-webkit-text-stroke:0.2px currentColor;">жен.</div>
<div class="t" style="left:221.5px;width:600px;text-align:center;top:562.77px;font-size:13.5px;line-height:13.5px;color:#111;font-weight:normal;transform:scaleX(1.01);transform-origin:50% 0;-webkit-text-stroke:0.2px currentColor;">Вспомогательный персонал</div>
<div class="t" style="left:362.5px;width:600px;text-align:center;top:562.77px;font-size:13.5px;line-height:13.5px;color:#111;font-weight:normal;transform:scaleX(0.95);transform-origin:50% 0;-webkit-text-stroke:0.2px currentColor;">12.01.2017</div>
<div class="t" style="right:61.700000000000045px;top:562.77px;font-size:13.5px;line-height:13.5px;color:#111;font-weight:normal;transform:scaleX(0.93);transform-origin:100% 0;-webkit-text-stroke:0.2px currentColor;">11456</div>
<div class="t" style="right:769.5px;top:582.77px;font-size:13.5px;line-height:13.5px;color:#111;font-weight:normal;transform:scaleX(0.93);transform-origin:100% 0;-webkit-text-stroke:0.2px currentColor;">16</div>
<div class="t" style="left:132.5px;top:582.77px;font-size:13.5px;line-height:13.5px;color:#111;font-weight:normal;transform:scaleX(0.965);transform-origin:0 0;-webkit-text-stroke:0.2px currentColor;">Парфенов Д. Ф.</div>
<div class="t" style="left:-5.5px;width:600px;text-align:center;top:582.77px;font-size:13.5px;line-height:13.5px;color:#111;font-weight:normal;transform:scaleX(0.91);transform-origin:50% 0;-webkit-text-stroke:0.2px currentColor;">1969</div>
<div class="t" style="left:88.5px;width:600px;text-align:center;top:582.77px;font-size:13.5px;line-height:13.5px;color:#111;font-weight:normal;transform:scaleX(1.01);transform-origin:50% 0;-webkit-text-stroke:0.2px currentColor;">муж.</div>
<div class="t" style="left:221.5px;width:600px;text-align:center;top:582.77px;font-size:13.5px;line-height:13.5px;color:#111;font-weight:normal;transform:scaleX(1.01);transform-origin:50% 0;-webkit-text-stroke:0.2px currentColor;">Основной персонал</div>
<div class="t" style="left:362.5px;width:600px;text-align:center;top:582.77px;font-size:13.5px;line-height:13.5px;color:#111;font-weight:normal;transform:scaleX(0.95);transform-origin:50% 0;-webkit-text-stroke:0.2px currentColor;">13.01.2017</div>
<div class="t" style="right:61.700000000000045px;top:582.77px;font-size:13.5px;line-height:13.5px;color:#111;font-weight:normal;transform:scaleX(0.93);transform-origin:100% 0;-webkit-text-stroke:0.2px currentColor;">35254</div>
<div class="t" style="right:769.5px;top:602.77px;font-size:13.5px;line-height:13.5px;color:#111;font-weight:normal;transform:scaleX(0.93);transform-origin:100% 0;-webkit-text-stroke:0.2px currentColor;">17</div>
<div class="t" style="left:132.5px;top:602.77px;font-size:13.5px;line-height:13.5px;color:#111;font-weight:normal;transform:scaleX(0.981);transform-origin:0 0;-webkit-text-stroke:0.2px currentColor;">Петров Ф. Л.</div>
<div class="t" style="left:-5.5px;width:600px;text-align:center;top:602.77px;font-size:13.5px;line-height:13.5px;color:#111;font-weight:normal;transform:scaleX(0.91);transform-origin:50% 0;-webkit-text-stroke:0.2px currentColor;">1987</div>
<div class="t" style="left:88.5px;width:600px;text-align:center;top:602.77px;font-size:13.5px;line-height:13.5px;color:#111;font-weight:normal;transform:scaleX(1.01);transform-origin:50% 0;-webkit-text-stroke:0.2px currentColor;">муж.</div>
<div class="t" style="left:221.5px;width:600px;text-align:center;top:602.77px;font-size:13.5px;line-height:13.5px;color:#111;font-weight:normal;transform:scaleX(1.01);transform-origin:50% 0;-webkit-text-stroke:0.2px currentColor;">Основной персонал</div>
<div class="t" style="left:362.5px;width:600px;text-align:center;top:602.77px;font-size:13.5px;line-height:13.5px;color:#111;font-weight:normal;transform:scaleX(0.95);transform-origin:50% 0;-webkit-text-stroke:0.2px currentColor;">14.01.2017</div>
<div class="t" style="right:61.700000000000045px;top:602.77px;font-size:13.5px;line-height:13.5px;color:#111;font-weight:normal;transform:scaleX(0.93);transform-origin:100% 0;-webkit-text-stroke:0.2px currentColor;">12102</div>
<div class="t" style="right:769.5px;top:622.77px;font-size:13.5px;line-height:13.5px;color:#111;font-weight:normal;transform:scaleX(0.93);transform-origin:100% 0;-webkit-text-stroke:0.2px currentColor;">18</div>
<div class="t" style="left:132.5px;top:622.77px;font-size:13.5px;line-height:13.5px;color:#111;font-weight:normal;transform:scaleX(0.997);transform-origin:0 0;-webkit-text-stroke:0.2px currentColor;">Попова М. Д.</div>
<div class="t" style="left:-5.5px;width:600px;text-align:center;top:622.77px;font-size:13.5px;line-height:13.5px;color:#111;font-weight:normal;transform:scaleX(0.91);transform-origin:50% 0;-webkit-text-stroke:0.2px currentColor;">1981</div>
<div class="t" style="left:88.5px;width:600px;text-align:center;top:622.77px;font-size:13.5px;line-height:13.5px;color:#111;font-weight:normal;transform:scaleX(1.01);transform-origin:50% 0;-webkit-text-stroke:0.2px currentColor;">жен.</div>
<div class="t" style="left:221.5px;width:600px;text-align:center;top:622.77px;font-size:13.5px;line-height:13.5px;color:#111;font-weight:normal;transform:scaleX(1.01);transform-origin:50% 0;-webkit-text-stroke:0.2px currentColor;">Вспомогательный персонал</div>
<div class="t" style="left:362.5px;width:600px;text-align:center;top:622.77px;font-size:13.5px;line-height:13.5px;color:#111;font-weight:normal;transform:scaleX(0.95);transform-origin:50% 0;-webkit-text-stroke:0.2px currentColor;">15.01.2017</div>
<div class="t" style="right:61.700000000000045px;top:622.77px;font-size:13.5px;line-height:13.5px;color:#111;font-weight:normal;transform:scaleX(0.93);transform-origin:100% 0;-webkit-text-stroke:0.2px currentColor;">9800</div>
<div style="left:840px;top:199px;width:16px;height:438px;background:#dfe3ea;border-left:1px solid #c3c9d1;"></div>
<div style="left:841px;top:200px;width:14px;height:7px;background:#fff;border:1px solid #9ba4ae;"></div>
<div style="left:844px;top:202px;width:8px;height:2px;background:#5c6570;"></div>
<svg style="left:843px;top:213px" width="10" height="5" viewBox="0 0 10 5"><path d="M0 5 L5 0 L10 5Z" fill="#4b5460"/></svg>
<div style="left:841px;top:224px;width:15px;height:181px;background:linear-gradient(90deg,#fbfcfd,#e9edf2);border:1px solid #a9b1bb;border-radius:2px;"></div>
<div style="left:845px;top:311px;width:7px;height:1px;background:#8a939e;"></div>
<div style="left:845px;top:313px;width:7px;height:1px;background:#8a939e;"></div>
<div style="left:845px;top:315px;width:7px;height:1px;background:#8a939e;"></div>
<svg style="left:843px;top:625px" width="10" height="5" viewBox="0 0 10 5"><path d="M0 0 L5 5 L10 0Z" fill="#4b5460"/></svg>
<div style="left:40px;top:637px;width:816px;height:16px;background:linear-gradient(#e9ecf1,#e1e5eb);border-top:1px solid #a0a8b4;border-bottom:1px solid #c3c9d1;"></div>
<svg style="left:44px;top:640px" width="58" height="10" viewBox="0 0 58 10">
<path d="M2.5 1 V9" stroke="#3c4450" stroke-width="1.3"/><path d="M8.5 1 L4 5 L8.5 9Z" fill="#3c4450"/>
<path d="M22.5 1 L18 5 L22.5 9Z" fill="#3c4450"/>
<path d="M32 1 L36.5 5 L32 9Z" fill="#3c4450"/>
<path d="M46 1 L50.5 5 L46 9Z" fill="#3c4450"/><path d="M52 1 V9" stroke="#3c4450" stroke-width="1.3"/>
</svg>
<div style="left:102px;top:637px;width:1px;height:16px;background:#c0c6ce;"></div>
<svg style="left:103px;top:637px" width="440" height="16" viewBox="0 0 440 16"><path d="M7 15 L19 0.5" stroke="#8e97a3" fill="none"/><path d="M6 15.5 L11 15.5 L10 12.5 Z" fill="#c9ced6"/><path d="M60 15 L72 0.5" stroke="#8e97a3" fill="none"/><path d="M59 15.5 L64 15.5 L63 12.5 Z" fill="#c9ced6"/><path d="M114 15 L126 0.5" stroke="#8e97a3" fill="none"/><path d="M113 15.5 L118 15.5 L117 12.5 Z" fill="#c9ced6"/><path d="M174 15 L186 0.5" stroke="#8e97a3" fill="none"/><path d="M173 15.5 L178 15.5 L177 12.5 Z" fill="#c9ced6"/><path d="M236 15 L248 0.5" stroke="#8e97a3" fill="none"/><path d="M235 15.5 L240 15.5 L239 12.5 Z" fill="#c9ced6"/><rect x="332" y="0" width="50" height="15" fill="#fff"/><path d="M331.5 0.5 V14.5" stroke="#8e97a3"/><path d="M327 15.5 H332 V12 Z" fill="#c9ced6"/><path d="M381.5 15 L395 0.5" stroke="#8e97a3" fill="none"/><path d="M381 15.5 L386 15.5 L385 12.5 Z" fill="#c9ced6"/></svg>
<div class="t" style="left:122.6px;top:638.12px;font-size:12.5px;line-height:12.5px;color:#4a4038;font-weight:normal;transform:scaleX(0.99);transform-origin:0 0;">Лист8</div>
<div class="t" style="left:175.7px;top:638.12px;font-size:12.5px;line-height:12.5px;color:#4a4038;font-weight:normal;transform:scaleX(0.99);transform-origin:0 0;">Лист9</div>
<div class="t" style="left:229.6px;top:638.12px;font-size:12.5px;line-height:12.5px;color:#4a4038;font-weight:normal;transform:scaleX(0.98);transform-origin:0 0;">Лист10</div>
<div class="t" style="left:291px;top:638.12px;font-size:12.5px;line-height:12.5px;color:#4a4038;font-weight:normal;transform:scaleX(0.98);transform-origin:0 0;">Лист11</div>
<div class="t" style="left:354.8px;top:638.12px;font-size:12.5px;line-height:12.5px;color:#4a4038;font-weight:normal;transform:scaleX(0.93);transform-origin:0 0;">Диаграмма1</div>
<div class="t" style="left:443.8px;top:638.12px;font-size:12.5px;line-height:12.5px;color:#1a1a1a;font-weight:bold;transform:scaleX(0.98);transform-origin:0 0;">Лист1</div>
<div style="left:497px;top:637px;width:24px;height:16px;overflow:hidden;"><div class="t" style="left:1px;top:1.1px;font-size:12.5px;line-height:15px;color:#4a4038;transform:scaleX(0.93);transform-origin:0 0;">Лист2</div></div>
<div style="left:521px;top:638px;width:6px;height:14px;background:#fff;border:1px solid #8e97a3;"></div>
<div style="left:523px;top:641px;width:1px;height:8px;background:#555;"></div>
<div style="left:526px;top:637px;width:330px;height:16px;background:#dfe3ea;border-top:1px solid #a9b0b8;"></div>
<svg style="left:532px;top:640px" width="6" height="10" viewBox="0 0 6 10"><path d="M5 0 L0 5 L5 10Z" fill="#3c4450"/></svg>
<div style="left:545px;top:638px;width:170px;height:15px;background:linear-gradient(#fbfcfd,#e6eaef);border:1px solid #a9b1bb;border-radius:2px;"></div>
<div style="left:627px;top:642px;width:1px;height:7px;background:#8a939e;"></div>
<div style="left:629px;top:642px;width:1px;height:7px;background:#8a939e;"></div>
<div style="left:631px;top:642px;width:1px;height:7px;background:#8a939e;"></div>
<div style="left:633px;top:642px;width:1px;height:7px;background:#8a939e;"></div>
<svg style="left:821px;top:640px" width="6" height="10" viewBox="0 0 6 10"><path d="M0 0 L5 5 L0 10Z" fill="#3c4450"/></svg>
<div style="left:832px;top:638px;width:7px;height:14px;background:#fff;border:1px solid #8e97a3;"></div>
<div style="left:835px;top:641px;width:1px;height:8px;background:#555;"></div>
<div style="left:841px;top:637px;width:15px;height:16px;background:#dfe3ea;"></div>
<div style="left:40px;top:653px;width:816px;height:22px;background:linear-gradient(#eef1f5,#dfe4ea 50%,#d3d9e1);border-top:1px solid #b7bec6;"></div>
<div class="t" style="left:-234px;width:600px;text-align:center;top:658.84px;font-size:12px;line-height:12px;color:#3a3a3a;font-weight:normal;transform:scaleX(0.99);transform-origin:50% 0;">Готово</div>
<div style="left:94px;top:656px;width:1px;height:17px;background:#b5bcc5;"></div>
<svg style="left:103px;top:656px" width="17" height="15" viewBox="0 0 17 15">
<rect x="1.5" y="2.5" width="15" height="12" fill="#fff" stroke="#2a5ab0"/>
<rect x="1.5" y="2.5" width="15" height="3" fill="#3a6ac0"/>
<path d="M3 8h5 M9 8h6 M3 10.5h5 M9 10.5h6 M3 13h5 M9 13h6" stroke="#7a9ad8"/>
<circle cx="4" cy="3" r="3" fill="#e04030"/>
</svg>
<div style="left:129px;top:656px;width:1px;height:17px;background:#b5bcc5;"></div>
<div style="left:597px;top:656px;width:1px;height:17px;background:#b5bcc5;"></div>
<div style="left:604px;top:654px;width:19px;height:20px;background:linear-gradient(#fde8a8,#fbd36a);border:1px solid #e3b35a;border-radius:2px;"></div>
<svg style="left:607px;top:659px" width="13" height="10" viewBox="0 0 13 10"><rect x="0" y="0" width="13" height="10" fill="#4a5262"/><rect x="1" y="1" width="3" height="2" fill="#fff"/><rect x="1" y="4" width="3" height="2" fill="#fff"/><rect x="1" y="7" width="3" height="2" fill="#fff"/><rect x="5" y="1" width="3" height="2" fill="#fff"/><rect x="5" y="4" width="3" height="2" fill="#fff"/><rect x="5" y="7" width="3" height="2" fill="#fff"/><rect x="9" y="1" width="3" height="2" fill="#fff"/><rect x="9" y="4" width="3" height="2" fill="#fff"/><rect x="9" y="7" width="3" height="2" fill="#fff"/></svg>
<svg style="left:625px;top:659px" width="14" height="11" viewBox="0 0 14 11">
<rect x="0" y="0" width="14" height="11" fill="#6a717c"/><rect x="1" y="1" width="12" height="9" fill="#b8bdc4"/>
<rect x="3.5" y="1.5" width="7" height="8" fill="#fff" stroke="#555c66"/>
<path d="M5 4.5h4 M5 6.5h4" stroke="#8a9099"/>
</svg>
<svg style="left:644px;top:659px" width="14" height="11" viewBox="0 0 14 11">
<rect x="0" y="0" width="14" height="11" fill="#6a717c"/><rect x="1" y="1" width="12" height="9" fill="#b0b5bc"/>
<rect x="2" y="1" width="3" height="6" fill="#fff"/><rect x="6" y="1" width="3" height="6" fill="#fff"/>
<path d="M1 7.5 H9.5 V1" stroke="#555c66" fill="none"/>
</svg>
<div class="t" style="left:669.5px;top:658.34px;font-size:12px;line-height:12px;color:#4a3a30;font-weight:normal;transform:scaleX(0.9);transform-origin:0 0;">100%</div>
<svg style="left:704px;top:655px" width="134" height="18" viewBox="0 0 134 18">
<path d="M17 9.5 H117" stroke="#9aa1aa"/>
<path d="M17 10.5 H117" stroke="#fff"/>
<circle cx="8.5" cy="9" r="7.5" fill="url(#g1)" stroke="#8a929c"/>
<path d="M5 9 H12" stroke="#4a525c" stroke-width="2"/>
<circle cx="124.5" cy="9" r="7.5" fill="url(#g1)" stroke="#8a929c"/>
<path d="M121 9 H128 M124.5 5.5 V12.5" stroke="#4a525c" stroke-width="2"/>
<path d="M63.5 3.5 H72.5 V11.5 L68 15.5 L63.5 11.5 Z" fill="#fdfdfe" stroke="#6e7680"/>
<defs><radialGradient id="g1" cx="50%" cy="30%" r="70%"><stop offset="0" stop-color="#ffffff"/><stop offset="1" stop-color="#dde2e8"/></radialGradient></defs>
</svg>
<svg style="left:844px;top:663px" width="10" height="10" viewBox="0 0 10 10">
<rect x="7" y="1" width="2" height="2" fill="#a9b0b8"/><rect x="4" y="4" width="2" height="2" fill="#a9b0b8"/><rect x="7" y="4" width="2" height="2" fill="#a9b0b8"/>
<rect x="1" y="7" width="2" height="2" fill="#a9b0b8"/><rect x="4" y="7" width="2" height="2" fill="#a9b0b8"/><rect x="7" y="7" width="2" height="2" fill="#a9b0b8"/>
</svg>
<div style="left:39px;top:675px;width:818px;height:1px;background:#8e96a2;"></div>
<div style="left:856px;top:170px;width:1px;height:506px;background:#8e96a2;"></div>
<svg style="left:41px;top:39px" width="16" height="16" viewBox="0 0 16 16">
<rect x="0.5" y="0.5" width="15" height="15" fill="#fdfbe8" stroke="#1f7a30"/>
<path d="M3.5 2.5 L7 8 L3.5 13.5 H6.5 L8.5 10 L10.5 13.5 H13 L9.8 8 L13 2.5 H10.5 L8.5 6 L6.5 2.5 Z" fill="#2f8f3a"/>
<path d="M5 3 L11.5 13" stroke="#9fd86a" stroke-width="1.4"/>
<path d="M12 7 L14 9" stroke="#f0b060" stroke-width="1"/>
</svg>
<div style="left:61px;top:40px;width:1px;height:14px;background:#8a97a8;"></div>
<svg style="left:69px;top:39px" width="15" height="15" viewBox="0 0 15 15">
<defs><linearGradient id="sv" x1="0" y1="0" x2="1" y2="1"><stop offset="0" stop-color="#8fb8f0"/><stop offset="0.5" stop-color="#3a6ad0"/><stop offset="1" stop-color="#2a2a90"/></linearGradient></defs>
<rect x="0.5" y="0.5" width="14" height="14" rx="1" fill="url(#sv)" stroke="#2a3a90"/>
<rect x="3" y="1" width="9" height="6" fill="#fff" stroke="#5a80c8" stroke-width="0.6"/>
<rect x="4" y="9.5" width="7" height="5" fill="#3a3a5a"/>
<rect x="7" y="10.5" width="3" height="3" fill="#eee"/>
</svg>
<svg style="left:91px;top:40px" width="14" height="13" viewBox="0 0 14 13">
<path d="M3 2 V7 H8" stroke="#a8b0bb" stroke-width="2.2" fill="none"/>
<path d="M3.5 6.5 Q8 1 12 6 Q13 9 10 12" stroke="#a8b0bb" stroke-width="2.2" fill="none"/>
</svg>
<svg style="left:110px;top:45px" width="5" height="3" viewBox="0 0 5 3"><path d="M0 0 H5 L2.5 3 Z" fill="#9aa3ae"/></svg>
<svg style="left:121px;top:40px" width="14" height="13" viewBox="0 0 14 13">
<path d="M11 2 V7 H6" stroke="#a8b0bb" stroke-width="2.2" fill="none"/>
<path d="M10.5 6.5 Q6 1 2 6 Q1 9 4 12" stroke="#a8b0bb" stroke-width="2.2" fill="none"/>
</svg>
<svg style="left:142px;top:45px" width="5" height="3" viewBox="0 0 5 3"><path d="M0 0 H5 L2.5 3 Z" fill="#9aa3ae"/></svg>
<svg style="left:155px;top:39px" width="15" height="16" viewBox="0 0 15 16">
<rect x="0.5" y="0.5" width="14" height="15" fill="#fff" stroke="#24418f"/>
<rect x="2" y="2" width="2" height="2" fill="#24418f"/>
<rect x="6.5" y="2.5" width="6" height="2" fill="#cfe0f8" stroke="#3a6ac8" stroke-width="0.8"/>
<rect x="2.5" y="6.5" width="2" height="7" fill="#cfe0f8" stroke="#3a6ac8" stroke-width="0.8"/>
<path d="M7 12.5 H11.5 V8 M9.5 9.5 L11.5 7.5 L13 9.5 M8.5 11 L7 12.5 L8.5 14" stroke="#333" fill="none" stroke-width="0.9"/>
</svg>
<div style="left:176px;top:40px;width:1px;height:14px;background:#8a97a8;"></div>
<div style="left:181px;top:44px;width:7px;height:1px;background:#222;"></div>
<svg style="left:181px;top:46px" width="7" height="4" viewBox="0 0 7 4"><path d="M0 0 H7 L3.5 4Z" fill="#222"/></svg>
<div style="left:231px;top:320px;width:475px;height:199px;border-radius:7px;box-shadow:2px 3px 8px rgba(0,0,0,0.35);"></div>
<div style="left:230px;top:320px;width:476px;height:199px;background:linear-gradient(#d6e2ef 0px,#e3ebf4 20px,#e9eff6 40px,#e4ebf3 100%);border:1px solid #6f7c8c;border-radius:7px 7px 5px 5px;"></div>
<div style="left:231px;top:321px;width:474px;height:197px;border:1px solid rgba(255,255,255,0.7);border-radius:6px 6px 4px 4px;"></div>
<div class="t" style="left:238.5px;top:329.02px;font-size:12.5px;line-height:12.5px;color:#1a1a1a;font-weight:normal;transform:scaleX(0.95);transform-origin:0 0;">Найти и заменить</div>
<div style="left:623px;top:320px;width:76px;height:20px;border:1px solid #8592a3;border-top:none;border-radius:0 0 4px 4px;background:linear-gradient(#e6edf5,#d3deea);"></div>
<div style="left:651px;top:320px;width:1px;height:19px;background:#8592a3;"></div>
<svg style="left:632px;top:322px" width="12" height="16" viewBox="0 0 12 16"><text x="6.5" y="13.3" text-anchor="middle" font-family="Liberation Sans" font-weight="bold" font-size="13.5" fill="#fff" stroke="#4a4f58" stroke-width="1.8" paint-order="stroke">?</text></svg>
<svg style="left:668px;top:324px" width="15" height="12" viewBox="0 0 15 12"><path d="M4 2.5 L11 9.5 M11 2.5 L4 9.5" stroke="#4a4f58" stroke-width="4.6" stroke-linecap="round"/><path d="M4 2.5 L11 9.5 M11 2.5 L4 9.5" stroke="#fff" stroke-width="2.4" stroke-linecap="round"/></svg>
<div style="left:237px;top:349px;width:462px;height:164px;background:#f0f0f0;border:1px solid #8c96a2;"></div>
<div style="left:244px;top:378px;width:446px;height:95px;background:#fff;border:1px solid #898c95;"></div>
<div style="left:300px;top:359px;width:61px;height:20px;background:linear-gradient(#f3f3f3,#e1e1e1);border:1px solid #898c95;border-bottom:none;border-left:none;"></div>
<div style="left:244px;top:357px;width:56px;height:22px;background:#fff;border:1px solid #898c95;border-bottom:none;"></div>
<div class="t" style="left:254.3px;top:363.77px;font-size:11.5px;line-height:11.5px;color:#111;font-weight:normal;transform:scaleX(0.92);transform-origin:0 0;">Найти</div>
<div style="left:268px;top:374px;width:5px;height:1px;background:#111;"></div>
<div class="t" style="left:305px;top:365.27px;font-size:11.5px;line-height:11.5px;color:#111;font-weight:normal;transform:scaleX(0.92);transform-origin:0 0;">Заменить</div>
<div style="left:347px;top:375px;width:6px;height:1px;background:#111;"></div>
<div class="t" style="left:252px;top:392.77px;font-size:11.5px;line-height:11.5px;color:#111;font-weight:normal;transform:scaleX(0.95);transform-origin:0 0;">Найти:</div>
<div style="left:278px;top:403px;width:6px;height:1px;background:#111;"></div>
<div style="left:329px;top:388px;width:354px;height:20px;background:#fff;border:1px solid #7a7a7a;"></div>
<div class="t" style="left:332px;top:392.27px;font-size:11.5px;line-height:11.5px;color:#111;font-weight:normal;transform:scaleX(0.95);transform-origin:0 0;">Коваль</div>
<div style="left:665px;top:390px;width:17px;height:16px;background:linear-gradient(#f4f4f4,#dcdcdc);border:1px solid #8a8a8a;border-radius:2px;"></div>
<svg style="left:670px;top:396px" width="7" height="4" viewBox="0 0 7 4"><path d="M0 0 H7 L3.5 4Z" fill="#111"/></svg>
<div style="left:589px;top:442px;width:93px;height:21px;background:linear-gradient(#f2f2f2 0%,#ebebeb 50%,#dddddd 51%,#cfcfcf 100%);border:1px solid #707070;border-radius:3px;box-shadow:inset 0 0 0 1px #fcfcfc;"></div>
<div class="t" style="left:597px;top:447.27px;font-size:11.5px;line-height:11.5px;color:#111;font-weight:normal;transform:scaleX(0.95);transform-origin:0 0;">Параметры &gt;&gt;</div>
<div style="left:597px;top:458px;width:7px;height:1px;background:#111;"></div>
<div style="left:432px;top:483px;width:74px;height:21px;background:linear-gradient(#f2f2f2 0%,#ebebeb 50%,#dddddd 51%,#cfcfcf 100%);border:1px solid #707070;border-radius:3px;box-shadow:inset 0 0 0 1px #fcfcfc;"></div>
<div class="t" style="left:442px;top:488.27px;font-size:11.5px;line-height:11.5px;color:#111;font-weight:normal;transform:scaleX(0.95);transform-origin:0 0;">Найти все</div>
<div style="left:442px;top:499px;width:7px;height:1px;background:#111;"></div>
<div style="left:516px;top:483px;width:82px;height:21px;background:linear-gradient(#f2f2f2 0%,#ebebeb 50%,#dddddd 51%,#cfcfcf 100%);border:1px solid #3c7fb1;border-radius:3px;box-shadow:inset 0 0 0 1px #bde6fd;"></div>
<div class="t" style="left:522.6px;top:488.27px;font-size:11.5px;line-height:11.5px;color:#111;font-weight:normal;transform:scaleX(0.95);transform-origin:0 0;">Найти далее</div>
<div style="left:564px;top:499px;width:7px;height:1px;background:#111;"></div>
<div style="left:617px;top:483px;width:74px;height:21px;background:linear-gradient(#f2f2f2 0%,#ebebeb 50%,#dddddd 51%,#cfcfcf 100%);border:1px solid #707070;border-radius:3px;box-shadow:inset 0 0 0 1px #fcfcfc;"></div>
<div class="t" style="left:632px;top:488.27px;font-size:11.5px;line-height:11.5px;color:#111;font-weight:normal;transform:scaleX(0.95);transform-origin:0 0;">Закрыть</div>
<div style="left:419px;top:469px;width:189px;height:45px;border:6px solid #f80a0a;border-radius:13px;box-shadow:1px 2px 3px rgba(0,0,0,0.35),inset 2px 3px 4px rgba(0,0,0,0.28);"></div>
<svg style="left:354px;top:47px" width="14" height="21" viewBox="0 0 14 21">
<path d="M1 1 V16 L4.5 12.5 L7 18.5 L9.5 17.5 L7 11.5 H12 Z" fill="#fff" stroke="#000" stroke-width="1.3" stroke-linejoin="miter"/>
</svg>
</body></html>
